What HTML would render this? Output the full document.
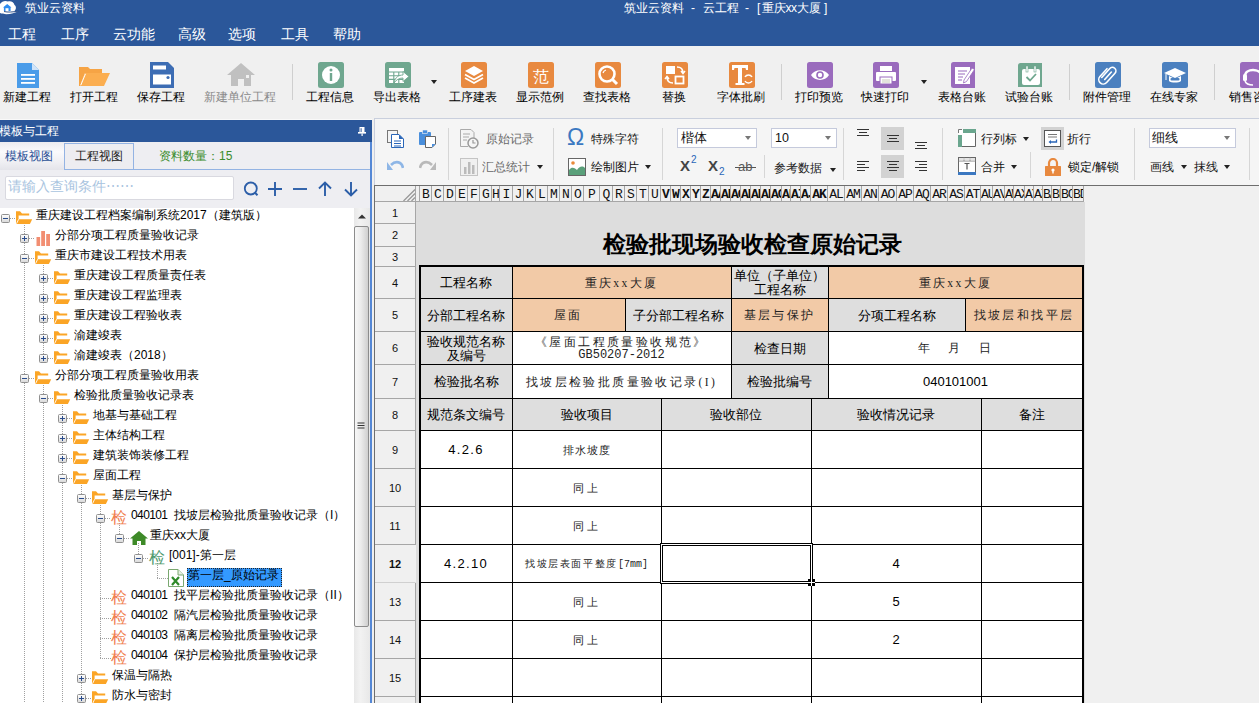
<!DOCTYPE html>
<html><head><meta charset="utf-8"><style>
*{margin:0;padding:0;box-sizing:border-box}
html,body{width:1259px;height:703px;overflow:hidden;background:#f0f0f0;font-family:"Liberation Sans",sans-serif;color:#000;position:relative}
.a{position:absolute}
.menu{position:absolute;top:25px;font-size:14px;line-height:18px;color:#fff}
.tlb{position:absolute;top:89px;width:120px;text-align:center;font-size:12px;line-height:16px;white-space:nowrap;font-weight:500}
.arr{position:absolute;width:0;height:0;border-left:3.5px solid transparent;border-right:3.5px solid transparent;border-top:4px solid #222}
</style></head><body>
<div class="a" style="left:0;top:0;width:1259px;height:46px;background:#2b579a;color:#fff">
  <svg class="a" style="left:0;top:0" width="20" height="16" viewBox="0 0 20 16">
    <path d="M0 4 C2 0.5 6 0.5 8 1.5 C11 0.5 14 2.5 14.5 5 C16.5 6 16.5 10 14 11.2 L18.5 11.2 C14 13.5 6 15.5 0 13 Z" fill="#fff"/>
    <path d="M3 7.5 L7.2 4 L11.5 7.5 L10.6 7.5 L10.6 11 L3.9 11 L3.9 7.5 Z" fill="#2d8cf0"/>
    <rect x="5.5" y="8.2" width="3" height="2.8" fill="#fff"/>
    <path d="M4 11.5 C8 12.5 12 12 18.5 11.2" stroke="#1b3f7e" stroke-width="0.9" fill="none"/>
  </svg>
  <div class="a" style="left:25px;top:0px;font-size:12px;line-height:16px">筑业云资料</div>
  <div class="a" style="left:624px;top:0px;font-size:12px;line-height:16px;white-space:nowrap">筑业云资料</div>
  <div class="a" style="left:691px;top:0px;font-size:12px;line-height:16px">-</div>
  <div class="a" style="left:703px;top:0px;font-size:12px;line-height:16px;white-space:nowrap">云工程</div>
  <div class="a" style="left:745px;top:0px;font-size:12px;line-height:16px">-</div>
  <div class="a" style="left:757px;top:0px;font-size:12px;line-height:16px">[</div>
  <div class="a" style="left:762px;top:0px;font-size:12px;line-height:16px;white-space:nowrap;letter-spacing:-0.3px">重庆xx大厦</div>
  <div class="a" style="left:824px;top:0px;font-size:12px;line-height:16px">]</div>

<div class="menu" style="left:8px">工程</div>
<div class="menu" style="left:61px">工序</div>
<div class="menu" style="left:113px">云功能</div>
<div class="menu" style="left:178px">高级</div>
<div class="menu" style="left:228px">选项</div>
<div class="menu" style="left:281px">工具</div>
<div class="menu" style="left:333px">帮助</div>
</div>
<div class="a" style="left:0;top:46px;width:1259px;height:72px;background:#f0f0f0"></div>
<svg class="a" style="left:16px;top:62px" width="24" height="26" viewBox="0 0 24 26"><path d="M1 1 H16 L23 8 V26 H1 Z" fill="#4a9ce9"/><path d="M16 1 V8 H23 Z" fill="#cfe3f8"/><rect x="5" y="12" width="14" height="1.8" fill="#fff"/><rect x="5" y="16" width="14" height="1.8" fill="#fff"/><rect x="5" y="20" width="14" height="1.8" fill="#fff"/></svg>
<div class="tlb" style="left:-33px;color:#000">新建工程</div>
<svg class="a" style="left:79px;top:64px" width="31" height="23" viewBox="0 0 31 23"><path d="M0 3 H9 L11 5 H23 V9 H6 L1 22 H0 Z" fill="#f6a445"/><path d="M6 9 H31 L25 22 H1 Z" fill="#fbae50"/><path d="M6.5 9.8 L1.8 21.2" stroke="#fff" stroke-width="1"/></svg>
<div class="tlb" style="left:34px;color:#000">打开工程</div>
<svg class="a" style="left:150px;top:62px" width="24" height="26" viewBox="0 0 24 26"><path d="M0 0 H18 L24 6 V26 H0 Z" fill="#3d6db4"/><rect x="3" y="3.5" width="13" height="4" fill="#fff"/><rect x="3" y="12.5" width="18" height="10" fill="#fff"/><circle cx="18" cy="15.5" r="1.6" fill="#3d6db4"/></svg>
<div class="tlb" style="left:101px;color:#000">保存工程</div>
<svg class="a" style="left:227px;top:63px" width="28" height="23" viewBox="0 0 28 23"><path d="M14 0 L28 12 H24 V24 H4 V12 H0 Z" fill="#c0c0c0"/><rect x="11" y="16" width="6" height="8" fill="#f0f0f0"/><rect x="19" y="12" width="3" height="3" fill="#f0f0f0"/></svg>
<div class="tlb" style="left:180px;color:#8a8a8a">新建单位工程</div>
<svg class="a" style="left:318px;top:62px" width="26" height="26" viewBox="0 0 26 26"><rect x="0" y="0" width="26" height="26" rx="2.5" fill="#6fa78f"/><circle cx="13" cy="13" r="9" fill="#fff"/><rect x="11.8" y="11" width="2.4" height="8" fill="#6fa78f"/><circle cx="13" cy="8" r="1.5" fill="#6fa78f"/></svg>
<div class="tlb" style="left:270px;color:#000">工程信息</div>
<svg class="a" style="left:385px;top:62px" width="26" height="26" viewBox="0 0 26 26"><rect x="0" y="0" width="26" height="26" rx="2.5" fill="#6fa78f"/><rect x="4" y="6" width="15" height="15" fill="#fff"/><path d="M4 10 H19 M4 13.7 H19 M4 17.4 H19 M8.8 10 V21 M13.8 10 V21" stroke="#6fa78f" stroke-width="1.1"/><path d="M9 21 C10 15 14 13 18 13 V9.5 L24 14.5 L18 19.5 V16 C14 16 11 18 9 21 Z" fill="#fff" stroke="#6fa78f" stroke-width="0.9"/></svg>
<div class="tlb" style="left:337px;color:#000">导出表格</div>
<svg class="a" style="left:461px;top:62px" width="26" height="26" viewBox="0 0 26 26"><rect x="0" y="0" width="26" height="26" rx="2.5" fill="#e8893f"/><path d="M13 4 L22 9 L13 14 L4 9 Z" fill="#fff"/><path d="M4 12.5 L13 17.5 L22 12.5" fill="none" stroke="#fff" stroke-width="1.8"/><path d="M4 16 L13 21 L22 16" fill="none" stroke="#fff" stroke-width="1.8"/></svg>
<div class="tlb" style="left:413px;color:#000">工序建表</div>
<svg class="a" style="left:528px;top:62px" width="26" height="26" viewBox="0 0 26 26"><rect x="0" y="0" width="26" height="26" rx="2.5" fill="#e8893f"/><text x="13" y="19.5" font-size="16" fill="#fff" text-anchor="middle">范</text></svg>
<div class="tlb" style="left:480px;color:#000">显示范例</div>
<svg class="a" style="left:595px;top:62px" width="26" height="26" viewBox="0 0 26 26"><rect x="0" y="0" width="26" height="26" rx="2.5" fill="#e8893f"/><circle cx="12" cy="12" r="7.5" fill="none" stroke="#fff" stroke-width="2.6"/><path d="M17 17 L22 22" stroke="#fff" stroke-width="3"/><path d="M8 11 A4 4 0 0 1 11 8" stroke="#fff" stroke-width="1.2" fill="none"/></svg>
<div class="tlb" style="left:547px;color:#000">查找表格</div>
<svg class="a" style="left:662px;top:62px" width="26" height="26" viewBox="0 0 26 26"><rect x="0" y="0" width="26" height="26" rx="2.5" fill="#e8893f"/><rect x="4" y="4" width="9" height="8" fill="#fff"/><rect x="13.5" y="14.5" width="8" height="7" fill="none" stroke="#fff" stroke-width="1.8"/><path d="M15 5 C19 5 21 7 21 11 M19 9 L21 11.5 L23 9" fill="none" stroke="#fff" stroke-width="1.5"/><path d="M11 21 C7 21 5 19 5 15 M3 17 L5 14.5 L7 17" fill="none" stroke="#fff" stroke-width="1.5"/></svg>
<div class="tlb" style="left:614px;color:#000">替换</div>
<svg class="a" style="left:729px;top:62px" width="26" height="26" viewBox="0 0 26 26"><rect x="0" y="0" width="26" height="26" rx="2.5" fill="#e8893f"/><path d="M3 3 H19 V8 H17 L16.5 6 H13 V21 H15.5 V23 H6.5 V21 H9 V6 H5.5 L5 8 H3 Z" fill="#fff"/><path d="M16 15 A4 4 0 0 1 23 15 M23 19 A4 4 0 0 1 16 19" fill="none" stroke="#fff" stroke-width="1.5"/></svg>
<div class="tlb" style="left:681px;color:#000">字体批刷</div>
<svg class="a" style="left:807px;top:62px" width="26" height="26" viewBox="0 0 26 26"><rect x="0" y="0" width="26" height="26" rx="2.5" fill="#9a6bbd"/><path d="M4 13 C8 6.5 18 6.5 22 13 C18 19.5 8 19.5 4 13 Z" fill="#fff"/><circle cx="13" cy="13" r="3.8" fill="#9a6bbd"/><circle cx="13" cy="13" r="2.2" fill="#fff"/></svg>
<div class="tlb" style="left:759px;color:#000">打印预览</div>
<svg class="a" style="left:873px;top:62px" width="26" height="26" viewBox="0 0 26 26"><rect x="0" y="0" width="26" height="26" rx="2.5" fill="#9a6bbd"/><rect x="7" y="4" width="12" height="5" fill="#fff"/><rect x="3" y="10" width="20" height="9" rx="1" fill="#fff"/><rect x="7" y="15" width="12" height="7" fill="#fff" stroke="#9a6bbd" stroke-width="1"/><path d="M9 18 H17 M9 20 H17" stroke="#bba" stroke-width="0.8"/></svg>
<div class="tlb" style="left:825px;color:#000">快速打印</div>
<svg class="a" style="left:951px;top:62px" width="24" height="26" viewBox="0 0 24 26"><rect x="0" y="0" width="26" height="26" rx="2.5" fill="#9a6bbd"/><rect x="4" y="5" width="15" height="17" fill="#fff"/><path d="M7 9 H16 M7 12 H14 M7 15 H12 M7 18 H11" stroke="#9a6bbd" stroke-width="1.2"/><path d="M13 18 L21 6 L23.5 7.5 L15.5 19.5 L12.5 21 Z" fill="#fff" stroke="#9a6bbd" stroke-width="0.8"/></svg>
<div class="tlb" style="left:902px;color:#000">表格台账</div>
<svg class="a" style="left:1018px;top:63px" width="24" height="24" viewBox="0 0 24 24"><rect x="0" y="0" width="26" height="26" rx="2.5" fill="#6fa78f"/><rect x="4" y="6" width="18" height="16" rx="2" fill="#fff"/><rect x="8" y="3" width="2" height="6" fill="#fff" stroke="#6fa78f" stroke-width="0.6"/><rect x="16" y="3" width="2" height="6" fill="#fff" stroke="#6fa78f" stroke-width="0.6"/><path d="M8.5 14 L12 17.5 L18 11" fill="none" stroke="#6fa78f" stroke-width="1.8"/></svg>
<div class="tlb" style="left:969px;color:#000">试验台账</div>
<svg class="a" style="left:1095px;top:62px" width="26" height="26" viewBox="0 0 26 26"><rect x="0" y="0" width="26" height="26" rx="2.5" fill="#4b80bf"/><g transform="rotate(42 13 13)"><path d="M10 19 V7 A3.5 3.5 0 0 1 17 7 V19.5 A4.5 4.5 0 0 1 8 19.5 V9 M13.5 8.5 V18.5" fill="none" stroke="#fff" stroke-width="1.6" stroke-linecap="round"/></g></svg>
<div class="tlb" style="left:1047px;color:#000">附件管理</div>
<svg class="a" style="left:1162px;top:62px" width="26" height="26" viewBox="0 0 26 26"><rect x="0" y="0" width="26" height="26" rx="2.5" fill="#4b80bf"/><path d="M2 11 L13 6 L24 11 L13 16 Z" fill="#fff"/><path d="M7 14 V19 C9 21 17 21 19 19 V14 L13 17 Z" fill="#fff"/><rect x="8.5" y="16" width="9" height="2.5" rx="1" fill="#4b80bf"/><path d="M4 12 V18" stroke="#fff" stroke-width="1"/></svg>
<div class="tlb" style="left:1114px;color:#000">在线专家</div>
<svg class="a" style="left:1240px;top:62px" width="26" height="26" viewBox="0 0 26 26"><rect x="0" y="0" width="26" height="26" rx="2.5" fill="#9a6bbd"/><path d="M5 14 C5 6 21 6 21 14" fill="none" stroke="#fff" stroke-width="2.5"/><rect x="3" y="12" width="4" height="7" rx="1.5" fill="#fff"/><path d="M5 19 C6 22 10 23 13 23" fill="none" stroke="#fff" stroke-width="1.5"/></svg>
<div class="tlb" style="left:1193px;color:#000">销售咨询</div>
<div class="a" style="left:292px;top:64px;width:1px;height:36px;background:#cfcfcf"></div>
<div class="a" style="left:781px;top:64px;width:1px;height:36px;background:#cfcfcf"></div>
<div class="a" style="left:1069px;top:64px;width:1px;height:36px;background:#cfcfcf"></div>
<div class="a" style="left:1214px;top:64px;width:1px;height:36px;background:#cfcfcf"></div>
<div class="arr" style="left:431px;top:80px"></div>
<div class="arr" style="left:921px;top:80px"></div>
<div class="a" style="left:0;top:119px;width:372px;height:1px;background:#f9f9f9"></div>
<div class="a" style="left:0;top:120px;width:372px;height:22px;background:#2b579a"></div>
<div class="a" style="left:-1px;top:123px;font-size:12px;line-height:16px;color:#fff">模板与工程</div>
<svg class="a" style="left:358px;top:127px" width="8" height="9" viewBox="0 0 8 9"><rect x="1.5" y="0" width="5" height="5.2" fill="#fff"/><rect x="2.6" y="1.2" width="1" height="4" fill="#2b579a"/><rect x="0" y="5" width="8" height="1.6" fill="#fff"/><rect x="3.5" y="6.5" width="1.2" height="2.5" fill="#fff"/></svg>
<div class="a" style="left:0;top:142px;width:370px;height:66px;background:#eeeef2"></div>
<div class="a" style="left:370px;top:142px;width:2px;height:561px;background:#5588d6"></div>
<div class="a" style="left:0;top:142px;width:64px;height:28px;background:linear-gradient(#ececf0 0%,#fafafc 35%,#eeeef2 75%,#e4e4ea 100%)"></div>
<div class="a" style="left:5px;top:148px;font-size:12px;line-height:16px;color:#2a5096">模板视图</div>
<div class="a" style="left:64px;top:143px;width:70px;height:27px;border:1px solid #93b3e3;background:#ededf1"></div>
<div class="a" style="left:75px;top:148px;font-size:12px;line-height:16px;color:#222">工程视图</div>
<div class="a" style="left:134px;top:169px;width:236px;height:1px;background:#93b3e3"></div>
<div class="a" style="left:159px;top:148px;font-size:12px;line-height:16px;color:#3a8c2c">资料数量：15</div>
<div class="a" style="left:5px;top:176px;width:229px;height:24px;background:#fff;border:1px solid #d9d9e0;border-radius:2px"></div>
<div class="a" style="left:8px;top:177px;font-size:14px;line-height:18px;color:#a9c4e0;white-space:nowrap">请输入查询条件⋯⋯</div>
<svg class="a" style="left:240px;top:179px" width="122" height="20" viewBox="0 0 122 20"><circle cx="10.8" cy="9.5" r="6" fill="none" stroke="#2c5ea8" stroke-width="1.8"/><path d="M14.8 13.5 L17.5 16.2" stroke="#2c5ea8" stroke-width="2"/><path d="M28 10 H42 M35 3 V17" stroke="#2c5ea8" stroke-width="1.9"/><path d="M53 10 H67" stroke="#2c5ea8" stroke-width="1.9"/><path d="M85 3.5 V17 M79 9.5 L85 3.5 L91 9.5" stroke="#2c5ea8" stroke-width="1.9" fill="none"/><path d="M111 3 V16.5 M105 10.5 L111 16.5 L117 10.5" stroke="#2c5ea8" stroke-width="1.9" fill="none"/></svg>
<div class="a" style="left:0;top:208px;width:354px;height:495px;background:#fff;overflow:hidden">
<div class="a" style="left:24px;top:15px;width:1px;height:155px;background:repeating-linear-gradient(to bottom,#a0a0a0 0,#a0a0a0 1px,transparent 1px,transparent 2px)"></div>
<div class="a" style="left:24px;top:175px;width:1px;height:321px;background:repeating-linear-gradient(to bottom,#a0a0a0 0,#a0a0a0 1px,transparent 1px,transparent 2px)"></div>
<div class="a" style="left:43px;top:55px;width:1px;height:95px;background:repeating-linear-gradient(to bottom,#a0a0a0 0,#a0a0a0 1px,transparent 1px,transparent 2px)"></div>
<div class="a" style="left:43px;top:175px;width:1px;height:321px;background:repeating-linear-gradient(to bottom,#a0a0a0 0,#a0a0a0 1px,transparent 1px,transparent 2px)"></div>
<div class="a" style="left:62px;top:195px;width:1px;height:301px;background:repeating-linear-gradient(to bottom,#a0a0a0 0,#a0a0a0 1px,transparent 1px,transparent 2px)"></div>
<div class="a" style="left:81px;top:275px;width:1px;height:221px;background:repeating-linear-gradient(to bottom,#a0a0a0 0,#a0a0a0 1px,transparent 1px,transparent 2px)"></div>
<div class="a" style="left:100px;top:295px;width:1px;height:155px;background:repeating-linear-gradient(to bottom,#a0a0a0 0,#a0a0a0 1px,transparent 1px,transparent 2px)"></div>
<div class="a" style="left:119px;top:315px;width:1px;height:15px;background:repeating-linear-gradient(to bottom,#a0a0a0 0,#a0a0a0 1px,transparent 1px,transparent 2px)"></div>
<div class="a" style="left:138px;top:335px;width:1px;height:15px;background:repeating-linear-gradient(to bottom,#a0a0a0 0,#a0a0a0 1px,transparent 1px,transparent 2px)"></div>
<div class="a" style="left:157px;top:355px;width:1px;height:15px;background:repeating-linear-gradient(to bottom,#a0a0a0 0,#a0a0a0 1px,transparent 1px,transparent 2px)"></div>
<div class="a" style="left:10px;top:10px;width:6px;height:1px;background:repeating-linear-gradient(to right,#a0a0a0 0,#a0a0a0 1px,transparent 1px,transparent 2px)"></div>
<div class="a" style="left:29px;top:30px;width:6px;height:1px;background:repeating-linear-gradient(to right,#a0a0a0 0,#a0a0a0 1px,transparent 1px,transparent 2px)"></div>
<div class="a" style="left:29px;top:50px;width:6px;height:1px;background:repeating-linear-gradient(to right,#a0a0a0 0,#a0a0a0 1px,transparent 1px,transparent 2px)"></div>
<div class="a" style="left:48px;top:70px;width:6px;height:1px;background:repeating-linear-gradient(to right,#a0a0a0 0,#a0a0a0 1px,transparent 1px,transparent 2px)"></div>
<div class="a" style="left:48px;top:90px;width:6px;height:1px;background:repeating-linear-gradient(to right,#a0a0a0 0,#a0a0a0 1px,transparent 1px,transparent 2px)"></div>
<div class="a" style="left:48px;top:110px;width:6px;height:1px;background:repeating-linear-gradient(to right,#a0a0a0 0,#a0a0a0 1px,transparent 1px,transparent 2px)"></div>
<div class="a" style="left:48px;top:130px;width:6px;height:1px;background:repeating-linear-gradient(to right,#a0a0a0 0,#a0a0a0 1px,transparent 1px,transparent 2px)"></div>
<div class="a" style="left:48px;top:150px;width:6px;height:1px;background:repeating-linear-gradient(to right,#a0a0a0 0,#a0a0a0 1px,transparent 1px,transparent 2px)"></div>
<div class="a" style="left:29px;top:170px;width:6px;height:1px;background:repeating-linear-gradient(to right,#a0a0a0 0,#a0a0a0 1px,transparent 1px,transparent 2px)"></div>
<div class="a" style="left:48px;top:190px;width:6px;height:1px;background:repeating-linear-gradient(to right,#a0a0a0 0,#a0a0a0 1px,transparent 1px,transparent 2px)"></div>
<div class="a" style="left:67px;top:210px;width:6px;height:1px;background:repeating-linear-gradient(to right,#a0a0a0 0,#a0a0a0 1px,transparent 1px,transparent 2px)"></div>
<div class="a" style="left:67px;top:230px;width:6px;height:1px;background:repeating-linear-gradient(to right,#a0a0a0 0,#a0a0a0 1px,transparent 1px,transparent 2px)"></div>
<div class="a" style="left:67px;top:250px;width:6px;height:1px;background:repeating-linear-gradient(to right,#a0a0a0 0,#a0a0a0 1px,transparent 1px,transparent 2px)"></div>
<div class="a" style="left:67px;top:270px;width:6px;height:1px;background:repeating-linear-gradient(to right,#a0a0a0 0,#a0a0a0 1px,transparent 1px,transparent 2px)"></div>
<div class="a" style="left:86px;top:290px;width:6px;height:1px;background:repeating-linear-gradient(to right,#a0a0a0 0,#a0a0a0 1px,transparent 1px,transparent 2px)"></div>
<div class="a" style="left:105px;top:310px;width:6px;height:1px;background:repeating-linear-gradient(to right,#a0a0a0 0,#a0a0a0 1px,transparent 1px,transparent 2px)"></div>
<div class="a" style="left:124px;top:330px;width:6px;height:1px;background:repeating-linear-gradient(to right,#a0a0a0 0,#a0a0a0 1px,transparent 1px,transparent 2px)"></div>
<div class="a" style="left:143px;top:350px;width:6px;height:1px;background:repeating-linear-gradient(to right,#a0a0a0 0,#a0a0a0 1px,transparent 1px,transparent 2px)"></div>
<div class="a" style="left:157px;top:370px;width:11px;height:1px;background:repeating-linear-gradient(to right,#a0a0a0 0,#a0a0a0 1px,transparent 1px,transparent 2px)"></div>
<div class="a" style="left:100px;top:390px;width:11px;height:1px;background:repeating-linear-gradient(to right,#a0a0a0 0,#a0a0a0 1px,transparent 1px,transparent 2px)"></div>
<div class="a" style="left:100px;top:410px;width:11px;height:1px;background:repeating-linear-gradient(to right,#a0a0a0 0,#a0a0a0 1px,transparent 1px,transparent 2px)"></div>
<div class="a" style="left:100px;top:430px;width:11px;height:1px;background:repeating-linear-gradient(to right,#a0a0a0 0,#a0a0a0 1px,transparent 1px,transparent 2px)"></div>
<div class="a" style="left:100px;top:450px;width:11px;height:1px;background:repeating-linear-gradient(to right,#a0a0a0 0,#a0a0a0 1px,transparent 1px,transparent 2px)"></div>
<div class="a" style="left:86px;top:470px;width:6px;height:1px;background:repeating-linear-gradient(to right,#a0a0a0 0,#a0a0a0 1px,transparent 1px,transparent 2px)"></div>
<div class="a" style="left:86px;top:490px;width:6px;height:1px;background:repeating-linear-gradient(to right,#a0a0a0 0,#a0a0a0 1px,transparent 1px,transparent 2px)"></div>
<svg class="a" style="left:1px;top:6px" width="9" height="9" viewBox="0 0 9 9"><defs><linearGradient id="eg" x1="0" y1="0" x2="0" y2="1"><stop offset="0" stop-color="#fff"/><stop offset="1" stop-color="#d8d8d8"/></linearGradient></defs><rect x="0.5" y="0.5" width="8" height="8" rx="1" fill="url(#eg)" stroke="#909090"/><rect x="2" y="4" width="5" height="1" fill="#2a4c8c"/></svg>
<div class="a" style="left:16px;top:3px"><svg width="18" height="14" viewBox="0 0 18 14"><path d="M0 0.2 H4 L6 2.6 H13.2 V4.6 H2.6 V12.6 H0 Z" fill="#fba526"/><path d="M2.3 8.3 H16.2 L13.9 12.9 H0.4 Z" fill="#fba526"/><path d="M2.6 8.3 L0.6 12.6" stroke="#fff" stroke-width="0.9"/></svg></div>
<div class="a" style="left:36px;top:-1px;font-size:12px;line-height:16px;color:#000;white-space:nowrap;font-weight:500">重庆建设工程档案编制系统2017（建筑版）</div>
<svg class="a" style="left:20px;top:26px" width="9" height="9" viewBox="0 0 9 9"><defs><linearGradient id="eg" x1="0" y1="0" x2="0" y2="1"><stop offset="0" stop-color="#fff"/><stop offset="1" stop-color="#d8d8d8"/></linearGradient></defs><rect x="0.5" y="0.5" width="8" height="8" rx="1" fill="url(#eg)" stroke="#909090"/><rect x="2" y="4" width="5" height="1" fill="#2a4c8c"/><rect x="4" y="2" width="1" height="5" fill="#2a4c8c"/></svg>
<div class="a" style="left:36px;top:23px"><svg width="16" height="15" viewBox="0 0 16 15"><rect x="0.5" y="6" width="3.6" height="9" fill="#f28e72"/><rect x="5.2" y="0" width="3.8" height="15" fill="#f28e72"/><rect x="10.2" y="3" width="3.8" height="12" fill="#f28e72"/></svg></div>
<div class="a" style="left:55px;top:19px;font-size:12px;line-height:16px;color:#000;white-space:nowrap;font-weight:500">分部分项工程质量验收记录</div>
<svg class="a" style="left:20px;top:46px" width="9" height="9" viewBox="0 0 9 9"><defs><linearGradient id="eg" x1="0" y1="0" x2="0" y2="1"><stop offset="0" stop-color="#fff"/><stop offset="1" stop-color="#d8d8d8"/></linearGradient></defs><rect x="0.5" y="0.5" width="8" height="8" rx="1" fill="url(#eg)" stroke="#909090"/><rect x="2" y="4" width="5" height="1" fill="#2a4c8c"/></svg>
<div class="a" style="left:35px;top:43px"><svg width="18" height="14" viewBox="0 0 18 14"><path d="M0 0.2 H4 L6 2.6 H13.2 V4.6 H2.6 V12.6 H0 Z" fill="#fba526"/><path d="M2.3 8.3 H16.2 L13.9 12.9 H0.4 Z" fill="#fba526"/><path d="M2.6 8.3 L0.6 12.6" stroke="#fff" stroke-width="0.9"/></svg></div>
<div class="a" style="left:55px;top:39px;font-size:12px;line-height:16px;color:#000;white-space:nowrap;font-weight:500">重庆市建设工程技术用表</div>
<svg class="a" style="left:39px;top:66px" width="9" height="9" viewBox="0 0 9 9"><defs><linearGradient id="eg" x1="0" y1="0" x2="0" y2="1"><stop offset="0" stop-color="#fff"/><stop offset="1" stop-color="#d8d8d8"/></linearGradient></defs><rect x="0.5" y="0.5" width="8" height="8" rx="1" fill="url(#eg)" stroke="#909090"/><rect x="2" y="4" width="5" height="1" fill="#2a4c8c"/><rect x="4" y="2" width="1" height="5" fill="#2a4c8c"/></svg>
<div class="a" style="left:54px;top:63px"><svg width="18" height="14" viewBox="0 0 18 14"><path d="M0 0.2 H4 L6 2.6 H13.2 V4.6 H2.6 V12.6 H0 Z" fill="#fba526"/><path d="M2.3 8.3 H16.2 L13.9 12.9 H0.4 Z" fill="#fba526"/><path d="M2.6 8.3 L0.6 12.6" stroke="#fff" stroke-width="0.9"/></svg></div>
<div class="a" style="left:74px;top:59px;font-size:12px;line-height:16px;color:#000;white-space:nowrap;font-weight:500">重庆建设工程质量责任表</div>
<svg class="a" style="left:39px;top:86px" width="9" height="9" viewBox="0 0 9 9"><defs><linearGradient id="eg" x1="0" y1="0" x2="0" y2="1"><stop offset="0" stop-color="#fff"/><stop offset="1" stop-color="#d8d8d8"/></linearGradient></defs><rect x="0.5" y="0.5" width="8" height="8" rx="1" fill="url(#eg)" stroke="#909090"/><rect x="2" y="4" width="5" height="1" fill="#2a4c8c"/><rect x="4" y="2" width="1" height="5" fill="#2a4c8c"/></svg>
<div class="a" style="left:54px;top:83px"><svg width="18" height="14" viewBox="0 0 18 14"><path d="M0 0.2 H4 L6 2.6 H13.2 V4.6 H2.6 V12.6 H0 Z" fill="#fba526"/><path d="M2.3 8.3 H16.2 L13.9 12.9 H0.4 Z" fill="#fba526"/><path d="M2.6 8.3 L0.6 12.6" stroke="#fff" stroke-width="0.9"/></svg></div>
<div class="a" style="left:74px;top:79px;font-size:12px;line-height:16px;color:#000;white-space:nowrap;font-weight:500">重庆建设工程监理表</div>
<svg class="a" style="left:39px;top:106px" width="9" height="9" viewBox="0 0 9 9"><defs><linearGradient id="eg" x1="0" y1="0" x2="0" y2="1"><stop offset="0" stop-color="#fff"/><stop offset="1" stop-color="#d8d8d8"/></linearGradient></defs><rect x="0.5" y="0.5" width="8" height="8" rx="1" fill="url(#eg)" stroke="#909090"/><rect x="2" y="4" width="5" height="1" fill="#2a4c8c"/><rect x="4" y="2" width="1" height="5" fill="#2a4c8c"/></svg>
<div class="a" style="left:54px;top:103px"><svg width="18" height="14" viewBox="0 0 18 14"><path d="M0 0.2 H4 L6 2.6 H13.2 V4.6 H2.6 V12.6 H0 Z" fill="#fba526"/><path d="M2.3 8.3 H16.2 L13.9 12.9 H0.4 Z" fill="#fba526"/><path d="M2.6 8.3 L0.6 12.6" stroke="#fff" stroke-width="0.9"/></svg></div>
<div class="a" style="left:74px;top:99px;font-size:12px;line-height:16px;color:#000;white-space:nowrap;font-weight:500">重庆建设工程验收表</div>
<svg class="a" style="left:39px;top:126px" width="9" height="9" viewBox="0 0 9 9"><defs><linearGradient id="eg" x1="0" y1="0" x2="0" y2="1"><stop offset="0" stop-color="#fff"/><stop offset="1" stop-color="#d8d8d8"/></linearGradient></defs><rect x="0.5" y="0.5" width="8" height="8" rx="1" fill="url(#eg)" stroke="#909090"/><rect x="2" y="4" width="5" height="1" fill="#2a4c8c"/><rect x="4" y="2" width="1" height="5" fill="#2a4c8c"/></svg>
<div class="a" style="left:54px;top:123px"><svg width="18" height="14" viewBox="0 0 18 14"><path d="M0 0.2 H4 L6 2.6 H13.2 V4.6 H2.6 V12.6 H0 Z" fill="#fba526"/><path d="M2.3 8.3 H16.2 L13.9 12.9 H0.4 Z" fill="#fba526"/><path d="M2.6 8.3 L0.6 12.6" stroke="#fff" stroke-width="0.9"/></svg></div>
<div class="a" style="left:74px;top:119px;font-size:12px;line-height:16px;color:#000;white-space:nowrap;font-weight:500">渝建竣表</div>
<svg class="a" style="left:39px;top:146px" width="9" height="9" viewBox="0 0 9 9"><defs><linearGradient id="eg" x1="0" y1="0" x2="0" y2="1"><stop offset="0" stop-color="#fff"/><stop offset="1" stop-color="#d8d8d8"/></linearGradient></defs><rect x="0.5" y="0.5" width="8" height="8" rx="1" fill="url(#eg)" stroke="#909090"/><rect x="2" y="4" width="5" height="1" fill="#2a4c8c"/><rect x="4" y="2" width="1" height="5" fill="#2a4c8c"/></svg>
<div class="a" style="left:54px;top:143px"><svg width="18" height="14" viewBox="0 0 18 14"><path d="M0 0.2 H4 L6 2.6 H13.2 V4.6 H2.6 V12.6 H0 Z" fill="#fba526"/><path d="M2.3 8.3 H16.2 L13.9 12.9 H0.4 Z" fill="#fba526"/><path d="M2.6 8.3 L0.6 12.6" stroke="#fff" stroke-width="0.9"/></svg></div>
<div class="a" style="left:74px;top:139px;font-size:12px;line-height:16px;color:#000;white-space:nowrap;font-weight:500">渝建竣表（2018）</div>
<svg class="a" style="left:20px;top:166px" width="9" height="9" viewBox="0 0 9 9"><defs><linearGradient id="eg" x1="0" y1="0" x2="0" y2="1"><stop offset="0" stop-color="#fff"/><stop offset="1" stop-color="#d8d8d8"/></linearGradient></defs><rect x="0.5" y="0.5" width="8" height="8" rx="1" fill="url(#eg)" stroke="#909090"/><rect x="2" y="4" width="5" height="1" fill="#2a4c8c"/></svg>
<div class="a" style="left:35px;top:163px"><svg width="18" height="14" viewBox="0 0 18 14"><path d="M0 0.2 H4 L6 2.6 H13.2 V4.6 H2.6 V12.6 H0 Z" fill="#fba526"/><path d="M2.3 8.3 H16.2 L13.9 12.9 H0.4 Z" fill="#fba526"/><path d="M2.6 8.3 L0.6 12.6" stroke="#fff" stroke-width="0.9"/></svg></div>
<div class="a" style="left:55px;top:159px;font-size:12px;line-height:16px;color:#000;white-space:nowrap;font-weight:500">分部分项工程质量验收用表</div>
<svg class="a" style="left:39px;top:186px" width="9" height="9" viewBox="0 0 9 9"><defs><linearGradient id="eg" x1="0" y1="0" x2="0" y2="1"><stop offset="0" stop-color="#fff"/><stop offset="1" stop-color="#d8d8d8"/></linearGradient></defs><rect x="0.5" y="0.5" width="8" height="8" rx="1" fill="url(#eg)" stroke="#909090"/><rect x="2" y="4" width="5" height="1" fill="#2a4c8c"/></svg>
<div class="a" style="left:54px;top:183px"><svg width="18" height="14" viewBox="0 0 18 14"><path d="M0 0.2 H4 L6 2.6 H13.2 V4.6 H2.6 V12.6 H0 Z" fill="#fba526"/><path d="M2.3 8.3 H16.2 L13.9 12.9 H0.4 Z" fill="#fba526"/><path d="M2.6 8.3 L0.6 12.6" stroke="#fff" stroke-width="0.9"/></svg></div>
<div class="a" style="left:74px;top:179px;font-size:12px;line-height:16px;color:#000;white-space:nowrap;font-weight:500">检验批质量验收记录表</div>
<svg class="a" style="left:58px;top:206px" width="9" height="9" viewBox="0 0 9 9"><defs><linearGradient id="eg" x1="0" y1="0" x2="0" y2="1"><stop offset="0" stop-color="#fff"/><stop offset="1" stop-color="#d8d8d8"/></linearGradient></defs><rect x="0.5" y="0.5" width="8" height="8" rx="1" fill="url(#eg)" stroke="#909090"/><rect x="2" y="4" width="5" height="1" fill="#2a4c8c"/><rect x="4" y="2" width="1" height="5" fill="#2a4c8c"/></svg>
<div class="a" style="left:73px;top:203px"><svg width="18" height="14" viewBox="0 0 18 14"><path d="M0 0.2 H4 L6 2.6 H13.2 V4.6 H2.6 V12.6 H0 Z" fill="#fba526"/><path d="M2.3 8.3 H16.2 L13.9 12.9 H0.4 Z" fill="#fba526"/><path d="M2.6 8.3 L0.6 12.6" stroke="#fff" stroke-width="0.9"/></svg></div>
<div class="a" style="left:93px;top:199px;font-size:12px;line-height:16px;color:#000;white-space:nowrap;font-weight:500">地基与基础工程</div>
<svg class="a" style="left:58px;top:226px" width="9" height="9" viewBox="0 0 9 9"><defs><linearGradient id="eg" x1="0" y1="0" x2="0" y2="1"><stop offset="0" stop-color="#fff"/><stop offset="1" stop-color="#d8d8d8"/></linearGradient></defs><rect x="0.5" y="0.5" width="8" height="8" rx="1" fill="url(#eg)" stroke="#909090"/><rect x="2" y="4" width="5" height="1" fill="#2a4c8c"/><rect x="4" y="2" width="1" height="5" fill="#2a4c8c"/></svg>
<div class="a" style="left:73px;top:223px"><svg width="18" height="14" viewBox="0 0 18 14"><path d="M0 0.2 H4 L6 2.6 H13.2 V4.6 H2.6 V12.6 H0 Z" fill="#fba526"/><path d="M2.3 8.3 H16.2 L13.9 12.9 H0.4 Z" fill="#fba526"/><path d="M2.6 8.3 L0.6 12.6" stroke="#fff" stroke-width="0.9"/></svg></div>
<div class="a" style="left:93px;top:219px;font-size:12px;line-height:16px;color:#000;white-space:nowrap;font-weight:500">主体结构工程</div>
<svg class="a" style="left:58px;top:246px" width="9" height="9" viewBox="0 0 9 9"><defs><linearGradient id="eg" x1="0" y1="0" x2="0" y2="1"><stop offset="0" stop-color="#fff"/><stop offset="1" stop-color="#d8d8d8"/></linearGradient></defs><rect x="0.5" y="0.5" width="8" height="8" rx="1" fill="url(#eg)" stroke="#909090"/><rect x="2" y="4" width="5" height="1" fill="#2a4c8c"/><rect x="4" y="2" width="1" height="5" fill="#2a4c8c"/></svg>
<div class="a" style="left:73px;top:243px"><svg width="18" height="14" viewBox="0 0 18 14"><path d="M0 0.2 H4 L6 2.6 H13.2 V4.6 H2.6 V12.6 H0 Z" fill="#fba526"/><path d="M2.3 8.3 H16.2 L13.9 12.9 H0.4 Z" fill="#fba526"/><path d="M2.6 8.3 L0.6 12.6" stroke="#fff" stroke-width="0.9"/></svg></div>
<div class="a" style="left:93px;top:239px;font-size:12px;line-height:16px;color:#000;white-space:nowrap;font-weight:500">建筑装饰装修工程</div>
<svg class="a" style="left:58px;top:266px" width="9" height="9" viewBox="0 0 9 9"><defs><linearGradient id="eg" x1="0" y1="0" x2="0" y2="1"><stop offset="0" stop-color="#fff"/><stop offset="1" stop-color="#d8d8d8"/></linearGradient></defs><rect x="0.5" y="0.5" width="8" height="8" rx="1" fill="url(#eg)" stroke="#909090"/><rect x="2" y="4" width="5" height="1" fill="#2a4c8c"/></svg>
<div class="a" style="left:73px;top:263px"><svg width="18" height="14" viewBox="0 0 18 14"><path d="M0 0.2 H4 L6 2.6 H13.2 V4.6 H2.6 V12.6 H0 Z" fill="#fba526"/><path d="M2.3 8.3 H16.2 L13.9 12.9 H0.4 Z" fill="#fba526"/><path d="M2.6 8.3 L0.6 12.6" stroke="#fff" stroke-width="0.9"/></svg></div>
<div class="a" style="left:93px;top:259px;font-size:12px;line-height:16px;color:#000;white-space:nowrap;font-weight:500">屋面工程</div>
<svg class="a" style="left:77px;top:286px" width="9" height="9" viewBox="0 0 9 9"><defs><linearGradient id="eg" x1="0" y1="0" x2="0" y2="1"><stop offset="0" stop-color="#fff"/><stop offset="1" stop-color="#d8d8d8"/></linearGradient></defs><rect x="0.5" y="0.5" width="8" height="8" rx="1" fill="url(#eg)" stroke="#909090"/><rect x="2" y="4" width="5" height="1" fill="#2a4c8c"/></svg>
<div class="a" style="left:92px;top:283px"><svg width="18" height="14" viewBox="0 0 18 14"><path d="M0 0.2 H4 L6 2.6 H13.2 V4.6 H2.6 V12.6 H0 Z" fill="#fba526"/><path d="M2.3 8.3 H16.2 L13.9 12.9 H0.4 Z" fill="#fba526"/><path d="M2.6 8.3 L0.6 12.6" stroke="#fff" stroke-width="0.9"/></svg></div>
<div class="a" style="left:112px;top:279px;font-size:12px;line-height:16px;color:#000;white-space:nowrap;font-weight:500">基层与保护</div>
<svg class="a" style="left:96px;top:306px" width="9" height="9" viewBox="0 0 9 9"><defs><linearGradient id="eg" x1="0" y1="0" x2="0" y2="1"><stop offset="0" stop-color="#fff"/><stop offset="1" stop-color="#d8d8d8"/></linearGradient></defs><rect x="0.5" y="0.5" width="8" height="8" rx="1" fill="url(#eg)" stroke="#909090"/><rect x="2" y="4" width="5" height="1" fill="#2a4c8c"/></svg>
<div class="a" style="left:111px;top:301px"><div style="font-size:16px;line-height:18px;color:#f07f52;font-weight:300">检</div></div>
<div class="a" style="left:131px;top:299px;font-size:12px;line-height:16px;color:#000;white-space:nowrap;font-weight:500"><span style="letter-spacing:-0.6px">040101</span>&nbsp; 找坡层检验批质量验收记录（I）</div>
<svg class="a" style="left:115px;top:326px" width="9" height="9" viewBox="0 0 9 9"><defs><linearGradient id="eg" x1="0" y1="0" x2="0" y2="1"><stop offset="0" stop-color="#fff"/><stop offset="1" stop-color="#d8d8d8"/></linearGradient></defs><rect x="0.5" y="0.5" width="8" height="8" rx="1" fill="url(#eg)" stroke="#909090"/><rect x="2" y="4" width="5" height="1" fill="#2a4c8c"/></svg>
<div class="a" style="left:130px;top:323px"><svg width="18" height="14" viewBox="0 0 18 14"><path d="M9 0 L18 7.5 H15.5 V14 H11 V10 H7 V14 H2.5 V7.5 H0 Z" fill="#3e8a28"/></svg></div>
<div class="a" style="left:150px;top:319px;font-size:12px;line-height:16px;color:#000;white-space:nowrap;font-weight:500">重庆xx大厦</div>
<svg class="a" style="left:134px;top:346px" width="9" height="9" viewBox="0 0 9 9"><defs><linearGradient id="eg" x1="0" y1="0" x2="0" y2="1"><stop offset="0" stop-color="#fff"/><stop offset="1" stop-color="#d8d8d8"/></linearGradient></defs><rect x="0.5" y="0.5" width="8" height="8" rx="1" fill="url(#eg)" stroke="#909090"/><rect x="2" y="4" width="5" height="1" fill="#2a4c8c"/></svg>
<div class="a" style="left:149px;top:341px"><div style="font-size:16px;line-height:18px;color:#4f9a6e;font-weight:300">检</div></div>
<div class="a" style="left:169px;top:339px;font-size:12px;line-height:16px;color:#000;white-space:nowrap;font-weight:500">[001]-第一层</div>
<div class="a" style="left:168px;top:361px"><svg width="16" height="18" viewBox="0 0 16 18"><path d="M0.5 0.5 H10 L15.5 6 V17.5 H0.5 Z" fill="#fff" stroke="#7aa870"/><path d="M10 0.5 V6 H15.5" fill="#e6f0e2" stroke="#7aa870"/><path d="M4 8 L11 16 M11 8 L4 16" stroke="#2f8a2a" stroke-width="2.2"/></svg></div>
<div class="a" style="left:187px;top:360px;width:95px;height:19px;background:#3399ff;border:1px dotted #222"></div>
<div class="a" style="left:188px;top:359px;font-size:12px;line-height:16px;color:#000;white-space:nowrap;font-weight:500">第一层_原始记录</div>
<div class="a" style="left:111px;top:381px"><div style="font-size:16px;line-height:18px;color:#f07f52;font-weight:300">检</div></div>
<div class="a" style="left:131px;top:379px;font-size:12px;line-height:16px;color:#000;white-space:nowrap;font-weight:500"><span style="letter-spacing:-0.6px">040101</span>&nbsp; 找平层检验批质量验收记录（II）</div>
<div class="a" style="left:111px;top:401px"><div style="font-size:16px;line-height:18px;color:#f07f52;font-weight:300">检</div></div>
<div class="a" style="left:131px;top:399px;font-size:12px;line-height:16px;color:#000;white-space:nowrap;font-weight:500"><span style="letter-spacing:-0.6px">040102</span>&nbsp; 隔汽层检验批质量验收记录</div>
<div class="a" style="left:111px;top:421px"><div style="font-size:16px;line-height:18px;color:#f07f52;font-weight:300">检</div></div>
<div class="a" style="left:131px;top:419px;font-size:12px;line-height:16px;color:#000;white-space:nowrap;font-weight:500"><span style="letter-spacing:-0.6px">040103</span>&nbsp; 隔离层检验批质量验收记录</div>
<div class="a" style="left:111px;top:441px"><div style="font-size:16px;line-height:18px;color:#f07f52;font-weight:300">检</div></div>
<div class="a" style="left:131px;top:439px;font-size:12px;line-height:16px;color:#000;white-space:nowrap;font-weight:500"><span style="letter-spacing:-0.6px">040104</span>&nbsp; 保护层检验批质量验收记录</div>
<svg class="a" style="left:77px;top:466px" width="9" height="9" viewBox="0 0 9 9"><defs><linearGradient id="eg" x1="0" y1="0" x2="0" y2="1"><stop offset="0" stop-color="#fff"/><stop offset="1" stop-color="#d8d8d8"/></linearGradient></defs><rect x="0.5" y="0.5" width="8" height="8" rx="1" fill="url(#eg)" stroke="#909090"/><rect x="2" y="4" width="5" height="1" fill="#2a4c8c"/><rect x="4" y="2" width="1" height="5" fill="#2a4c8c"/></svg>
<div class="a" style="left:92px;top:463px"><svg width="18" height="14" viewBox="0 0 18 14"><path d="M0 0.2 H4 L6 2.6 H13.2 V4.6 H2.6 V12.6 H0 Z" fill="#fba526"/><path d="M2.3 8.3 H16.2 L13.9 12.9 H0.4 Z" fill="#fba526"/><path d="M2.6 8.3 L0.6 12.6" stroke="#fff" stroke-width="0.9"/></svg></div>
<div class="a" style="left:112px;top:459px;font-size:12px;line-height:16px;color:#000;white-space:nowrap;font-weight:500">保温与隔热</div>
<svg class="a" style="left:77px;top:486px" width="9" height="9" viewBox="0 0 9 9"><defs><linearGradient id="eg" x1="0" y1="0" x2="0" y2="1"><stop offset="0" stop-color="#fff"/><stop offset="1" stop-color="#d8d8d8"/></linearGradient></defs><rect x="0.5" y="0.5" width="8" height="8" rx="1" fill="url(#eg)" stroke="#909090"/><rect x="2" y="4" width="5" height="1" fill="#2a4c8c"/><rect x="4" y="2" width="1" height="5" fill="#2a4c8c"/></svg>
<div class="a" style="left:92px;top:483px"><svg width="18" height="14" viewBox="0 0 18 14"><path d="M0 0.2 H4 L6 2.6 H13.2 V4.6 H2.6 V12.6 H0 Z" fill="#fba526"/><path d="M2.3 8.3 H16.2 L13.9 12.9 H0.4 Z" fill="#fba526"/><path d="M2.6 8.3 L0.6 12.6" stroke="#fff" stroke-width="0.9"/></svg></div>
<div class="a" style="left:112px;top:479px;font-size:12px;line-height:16px;color:#000;white-space:nowrap;font-weight:500">防水与密封</div>
</div>
<div class="a" style="left:354px;top:208px;width:16px;height:495px;background:linear-gradient(to right,#e8e8e8,#f2f2f2 40%,#e8e8e8)"></div>
<svg class="a" style="left:357px;top:213px" width="10" height="6" viewBox="0 0 10 6"><path d="M1 5.5 L5 1.5 L9 5.5 Z" fill="#333"/></svg>
<div class="a" style="left:354px;top:226px;width:15px;height:401px;border:1px solid #8c8c8c;border-radius:2px;background:linear-gradient(to right,#f7f7f7,#ececec 45%,#cfcfcf)"></div>
<svg class="a" style="left:357px;top:422px" width="8" height="8" viewBox="0 0 8 8"><path d="M0.5 1 H7.5 M0.5 3.5 H7.5 M0.5 6 H7.5" stroke="#333" stroke-width="1.2"/></svg>
<div class="a" style="left:374px;top:118px;width:885px;height:67px;background:#f5f5f5;border-top:1px solid #c9cfdd;border-left:1px solid #c9cfdd"></div>
<svg class="a" style="left:387px;top:130px" width="18" height="18" viewBox="0 0 18 18"><rect x="0.5" y="0.5" width="10" height="12" fill="#f4f4f4" stroke="#777"/><path d="M4.5 4.5 H12 L16.5 9 V17.5 H4.5 Z" fill="#fff" stroke="#2a66b8"/><path d="M12 4.5 V9 H16.5" fill="#2a66b8"/><path d="M7 11 H14 M7 13.5 H14 M7 16 H14" stroke="#2a66b8" stroke-width="1.2"/></svg>
<svg class="a" style="left:419px;top:130px" width="18" height="18" viewBox="0 0 18 18"><rect x="0" y="2" width="12" height="13" rx="1" fill="#4a8fdc"/><rect x="3.5" y="0" width="5" height="3.5" fill="#4a8fdc" stroke="#f5f5f5" stroke-width="0.6"/><path d="M6.5 6.5 H16.5 V14 L13 17.5 H6.5 Z" fill="#fff" stroke="#666"/><path d="M13 17.5 V14 H16.5" fill="#4a8fdc"/></svg>
<svg class="a" style="left:387px;top:159px" width="17" height="14" viewBox="0 0 17 14"><path d="M4 6 C9 1 15 3 16 9" fill="none" stroke="#8eb6e6" stroke-width="2.6"/><path d="M0 3 L6 11 L0 11 Z" fill="#8eb6e6"/></svg>
<svg class="a" style="left:419px;top:159px" width="17" height="14" viewBox="0 0 17 14"><path d="M13 6 C8 1 2 3 1 9" fill="none" stroke="#b9b9b9" stroke-width="2.6"/><path d="M17 3 L11 11 L17 11 Z" fill="#b9b9b9"/></svg>
<div class="a" style="left:448px;top:128px;width:1px;height:52px;background:#d6d6d6"></div>
<svg class="a" style="left:460px;top:129px" width="19" height="20" viewBox="0 0 19 20"><path d="M0.5 0.5 H11 L14 3.5 V11" fill="#f3f3f3" stroke="#aaa"/><path d="M0.5 0.5 V17.5 H8" fill="none" stroke="#aaa"/><path d="M3 5 H10 M3 8 H9 M3 11 H7" stroke="#aaa" stroke-width="1.1"/><circle cx="13" cy="14" r="5" fill="#f5f5f5" stroke="#999" stroke-width="1.5"/><path d="M13 11 V14 H15.5" stroke="#999" stroke-width="1.2" fill="none"/></svg>
<div class="a" style="left:486px;top:131px;font-size:12px;line-height:16px;color:#6a6a6a;white-space:nowrap;font-weight:500">原始记录</div>
<svg class="a" style="left:460px;top:158px" width="18" height="18" viewBox="0 0 18 18"><rect x="0.5" y="0.5" width="17" height="17" fill="#f0f0f0" stroke="#c4c4c4"/><rect x="4" y="9" width="2.5" height="7" fill="#bbb"/><rect x="8" y="4" width="2.5" height="12" fill="#bbb"/><rect x="12" y="7" width="2.5" height="9" fill="#bbb"/></svg>
<div class="a" style="left:482px;top:159px;font-size:12px;line-height:16px;color:#666;white-space:nowrap;font-weight:500">汇总统计</div>
<div class="arr" style="left:537px;top:165px;border-top-color:#222"></div>
<div class="a" style="left:553px;top:128px;width:1px;height:52px;background:#d6d6d6"></div>
<div class="a" style="left:567px;top:124px;font-size:23px;line-height:26px;color:#3b78c1">Ω</div>
<div class="a" style="left:591px;top:131px;font-size:12px;line-height:16px;color:#111;white-space:nowrap;font-weight:500">特殊字符</div>
<svg class="a" style="left:568px;top:158px" width="18" height="18" viewBox="0 0 18 18"><rect x="0.5" y="0.5" width="17" height="17" fill="#fff" stroke="#666"/><path d="M1 17 L1 12 C4 8 7 10 9 12 C11 9 14 7 17 10 V17 Z" fill="#5aa07a"/><circle cx="5" cy="5" r="1.8" fill="#e88a3a"/></svg>
<div class="a" style="left:591px;top:159px;font-size:12px;line-height:16px;color:#111;white-space:nowrap;font-weight:500">绘制图片</div>
<div class="arr" style="left:645px;top:165px;border-top-color:#222"></div>
<div class="a" style="left:662px;top:128px;width:1px;height:52px;background:#d6d6d6"></div>
<div class="a" style="left:677px;top:128px;width:80px;height:20px;background:#fff;border:1px solid #c5cadc"></div>
<div class="a" style="left:681px;top:130px;font-size:12.5px;line-height:16px;color:#111;white-space:nowrap;font-weight:500">楷体</div>
<div class="arr" style="left:745px;top:136px;border-top-color:#777"></div>
<div class="a" style="left:771px;top:128px;width:66px;height:20px;background:#fff;border:1px solid #c5cadc"></div>
<div class="a" style="left:775px;top:130px;font-size:12.5px;line-height:16px;color:#111;white-space:nowrap;font-weight:500">10</div>
<div class="arr" style="left:825px;top:136px;border-top-color:#777"></div>
<div class="a" style="left:680px;top:157px;font-size:15px;line-height:18px;font-weight:bold;color:#444">X</div>
<div class="a" style="left:691px;top:154px;font-size:10px;line-height:12px;color:#2a66b8">2</div>
<div class="a" style="left:708px;top:157px;font-size:15px;line-height:18px;font-weight:bold;color:#444">X</div>
<div class="a" style="left:719px;top:166px;font-size:10px;line-height:12px;color:#2a66b8">2</div>
<div class="a" style="left:738px;top:159px;font-size:13px;line-height:16px;color:#555">ab</div>
<div class="a" style="left:735px;top:167px;width:21px;height:1px;background:#555"></div>
<div class="a" style="left:764px;top:155px;width:1px;height:23px;background:#d6d6d6"></div>
<div class="a" style="left:774px;top:160px;font-size:12px;line-height:16px;color:#222;white-space:nowrap;font-weight:500">参考数据</div>
<div class="arr" style="left:830px;top:168px;border-top-color:#222"></div>
<div class="a" style="left:843px;top:128px;width:1px;height:52px;background:#d6d6d6"></div>
<div class="a" style="left:881px;top:127px;width:23px;height:23px;background:#d2d2d2"></div>
<div class="a" style="left:881px;top:155px;width:23px;height:23px;background:#d2d2d2"></div>
<svg class="a" style="left:857px;top:129px" width="12" height="8" viewBox="0 0 12 8"><rect x="0" y="0" width="12" height="1" fill="#333"/><rect x="2" y="3" width="8" height="1" fill="#333"/><rect x="0" y="6" width="12" height="1" fill="#333"/></svg>
<svg class="a" style="left:887px;top:135px" width="12" height="8" viewBox="0 0 12 8"><rect x="0" y="0" width="12" height="1" fill="#333"/><rect x="2" y="3" width="8" height="1" fill="#333"/><rect x="0" y="6" width="12" height="1" fill="#333"/></svg>
<svg class="a" style="left:915px;top:142px" width="12" height="8" viewBox="0 0 12 8"><rect x="0" y="0" width="12" height="1" fill="#333"/><rect x="2" y="3" width="8" height="1" fill="#333"/><rect x="0" y="6" width="12" height="1" fill="#333"/></svg>
<svg class="a" style="left:857px;top:161px" width="12" height="10" viewBox="0 0 12 10"><rect x="0" y="0" width="12" height="1" fill="#333"/><rect x="0" y="3" width="8" height="1" fill="#333"/><rect x="0" y="6" width="12" height="1" fill="#333"/><rect x="0" y="9" width="8" height="1" fill="#333"/></svg>
<svg class="a" style="left:887px;top:161px" width="12" height="10" viewBox="0 0 12 10"><rect x="0" y="0" width="12" height="1" fill="#333"/><rect x="2" y="3" width="8" height="1" fill="#333"/><rect x="0" y="6" width="12" height="1" fill="#333"/><rect x="2" y="9" width="8" height="1" fill="#333"/></svg>
<svg class="a" style="left:915px;top:161px" width="12" height="10" viewBox="0 0 12 10"><rect x="0" y="0" width="12" height="1" fill="#333"/><rect x="4" y="3" width="8" height="1" fill="#333"/><rect x="0" y="6" width="12" height="1" fill="#333"/><rect x="4" y="9" width="8" height="1" fill="#333"/></svg>
<div class="a" style="left:942px;top:128px;width:1px;height:52px;background:#d6d6d6"></div>
<svg class="a" style="left:958px;top:129px" width="18" height="18" viewBox="0 0 18 18"><rect x="0.5" y="0.5" width="17" height="17" fill="#fff"/><path d="M17.5 4 V17.5 H4" fill="none" stroke="#666"/><path d="M0.5 4 V0.5 H4" fill="none" stroke="#777"/><rect x="5" y="0" width="13" height="4" fill="#6aa68e"/><rect x="0" y="6" width="4" height="12" fill="#6aa68e"/></svg>
<div class="a" style="left:981px;top:131px;font-size:12px;line-height:16px;color:#111;white-space:nowrap;font-weight:500">行列标</div>
<div class="arr" style="left:1023px;top:137px;border-top-color:#222"></div>
<div class="a" style="left:1041px;top:127px;width:23px;height:23px;background:#d2d2d2"></div>
<svg class="a" style="left:1044px;top:130px" width="17" height="17" viewBox="0 0 17 17"><rect x="0.5" y="0.5" width="16" height="16" fill="#fff" stroke="#555"/><path d="M4 4.5 H13 M4 7 H13" stroke="#777"/><path d="M12.5 9.5 V12 H6" stroke="#2a66b8" stroke-width="1.3" fill="none"/><path d="M4.5 12 L7 10 V14 Z" fill="#2a66b8"/></svg>
<div class="a" style="left:1067px;top:131px;font-size:12px;line-height:16px;color:#111;white-space:nowrap;font-weight:500">折行</div>
<svg class="a" style="left:958px;top:157px" width="18" height="18" viewBox="0 0 18 18"><rect x="0.5" y="0.5" width="17" height="17" fill="#fff" stroke="#666"/><path d="M0.5 4 H17.5 M6 0.5 V4 M12 0.5 V4" stroke="#888"/><rect x="1" y="1" width="4.5" height="2.5" fill="#e4e4e4"/><rect x="6.5" y="1" width="5" height="2.5" fill="#e4e4e4"/><rect x="12.5" y="1" width="4.5" height="2.5" fill="#e4e4e4"/><rect x="0" y="15" width="18" height="3" fill="#3b78c1"/><path d="M6.5 6.5 H11.5 M9 6.5 V12.5" stroke="#555" stroke-width="1.2"/></svg>
<div class="a" style="left:981px;top:159px;font-size:12px;line-height:16px;color:#111;white-space:nowrap;font-weight:500">合并</div>
<div class="arr" style="left:1011px;top:165px;border-top-color:#222"></div>
<div class="a" style="left:1030px;top:152px;width:1px;height:26px;background:#d6d6d6"></div>
<svg class="a" style="left:1045px;top:158px" width="16" height="18" viewBox="0 0 16 18"><path d="M4 8 V5 A4 4 0 0 1 12 5 V8" fill="none" stroke="#e8893f" stroke-width="2.2"/><rect x="0" y="8" width="16" height="10" rx="0.5" fill="#e8893f"/><circle cx="8" cy="12" r="1.6" fill="#fff"/><rect x="7.3" y="12" width="1.4" height="3.5" fill="#fff"/></svg>
<div class="a" style="left:1068px;top:159px;font-size:12px;line-height:16px;color:#111;white-space:nowrap;font-weight:500">锁定/解锁</div>
<div class="a" style="left:1134px;top:128px;width:1px;height:52px;background:#d6d6d6"></div>
<div class="a" style="left:1149px;top:128px;width:87px;height:20px;background:#fff;border:1px solid #c5cadc"></div>
<div class="a" style="left:1152px;top:130px;font-size:12.5px;line-height:16px;color:#111;white-space:nowrap;font-weight:500">细线</div>
<div class="arr" style="left:1224px;top:136px;border-top-color:#777"></div>
<div class="a" style="left:1150px;top:159px;font-size:12px;line-height:16px;color:#111;white-space:nowrap;font-weight:500">画线</div>
<div class="arr" style="left:1181px;top:165px;border-top-color:#222"></div>
<div class="a" style="left:1194px;top:159px;font-size:12px;line-height:16px;color:#111;white-space:nowrap;font-weight:500">抹线</div>
<div class="arr" style="left:1224px;top:165px;border-top-color:#222"></div>
<div class="a" style="left:1249px;top:128px;width:1px;height:52px;background:#d6d6d6"></div>
<div class="a" style="left:374px;top:185px;width:885px;height:518px;background:#f0f0f0;border-top:1px solid #6e6e6e;border-left:1px solid #6e6e6e"></div>
<div class="a" style="left:416px;top:202px;width:669px;height:501px;background:#dddddd"></div>
<div class="a" style="left:416px;top:186px;width:4px;height:16px;padding-top:1px;background:#f0f0f0;border-right:1px solid #a6a6a6;border-bottom:1px solid #a6a6a6;overflow:hidden;font-family:'Liberation Mono',monospace;font-size:13px;line-height:16px;text-align:center;letter-spacing:-1px;font-weight:normal;color:#111"></div>
<div class="a" style="left:420px;top:186px;width:12px;height:16px;padding-top:1px;background:#f0f0f0;border-right:1px solid #a6a6a6;border-bottom:1px solid #a6a6a6;overflow:hidden;font-family:'Liberation Mono',monospace;font-size:13px;line-height:16px;text-align:center;letter-spacing:-1px;font-weight:normal;color:#111">B</div>
<div class="a" style="left:432px;top:186px;width:12px;height:16px;padding-top:1px;background:#f0f0f0;border-right:1px solid #a6a6a6;border-bottom:1px solid #a6a6a6;overflow:hidden;font-family:'Liberation Mono',monospace;font-size:13px;line-height:16px;text-align:center;letter-spacing:-1px;font-weight:normal;color:#111">C</div>
<div class="a" style="left:444px;top:186px;width:12px;height:16px;padding-top:1px;background:#f0f0f0;border-right:1px solid #a6a6a6;border-bottom:1px solid #a6a6a6;overflow:hidden;font-family:'Liberation Mono',monospace;font-size:13px;line-height:16px;text-align:center;letter-spacing:-1px;font-weight:normal;color:#111">D</div>
<div class="a" style="left:456px;top:186px;width:12px;height:16px;padding-top:1px;background:#f0f0f0;border-right:1px solid #a6a6a6;border-bottom:1px solid #a6a6a6;overflow:hidden;font-family:'Liberation Mono',monospace;font-size:13px;line-height:16px;text-align:center;letter-spacing:-1px;font-weight:normal;color:#111">E</div>
<div class="a" style="left:468px;top:186px;width:12px;height:16px;padding-top:1px;background:#f0f0f0;border-right:1px solid #a6a6a6;border-bottom:1px solid #a6a6a6;overflow:hidden;font-family:'Liberation Mono',monospace;font-size:13px;line-height:16px;text-align:center;letter-spacing:-1px;font-weight:normal;color:#111">F</div>
<div class="a" style="left:480px;top:186px;width:12px;height:16px;padding-top:1px;background:#f0f0f0;border-right:1px solid #a6a6a6;border-bottom:1px solid #a6a6a6;overflow:hidden;font-family:'Liberation Mono',monospace;font-size:13px;line-height:16px;text-align:center;letter-spacing:-1px;font-weight:normal;color:#111">G</div>
<div class="a" style="left:492px;top:186px;width:8px;height:16px;padding-top:1px;background:#f0f0f0;border-right:1px solid #a6a6a6;border-bottom:1px solid #a6a6a6;overflow:hidden;font-family:'Liberation Mono',monospace;font-size:13px;line-height:16px;text-align:center;letter-spacing:-1px;font-weight:normal;color:#111">H</div>
<div class="a" style="left:500px;top:186px;width:13px;height:16px;padding-top:1px;background:#f0f0f0;border-right:1px solid #a6a6a6;border-bottom:1px solid #a6a6a6;overflow:hidden;font-family:'Liberation Mono',monospace;font-size:13px;line-height:16px;text-align:center;letter-spacing:-1px;font-weight:normal;color:#111">I</div>
<div class="a" style="left:513px;top:186px;width:11px;height:16px;padding-top:1px;background:#f0f0f0;border-right:1px solid #a6a6a6;border-bottom:1px solid #a6a6a6;overflow:hidden;font-family:'Liberation Mono',monospace;font-size:13px;line-height:16px;text-align:center;letter-spacing:-1px;font-weight:normal;color:#111">J</div>
<div class="a" style="left:524px;top:186px;width:12px;height:16px;padding-top:1px;background:#f0f0f0;border-right:1px solid #a6a6a6;border-bottom:1px solid #a6a6a6;overflow:hidden;font-family:'Liberation Mono',monospace;font-size:13px;line-height:16px;text-align:center;letter-spacing:-1px;font-weight:normal;color:#111">K</div>
<div class="a" style="left:536px;top:186px;width:12px;height:16px;padding-top:1px;background:#f0f0f0;border-right:1px solid #a6a6a6;border-bottom:1px solid #a6a6a6;overflow:hidden;font-family:'Liberation Mono',monospace;font-size:13px;line-height:16px;text-align:center;letter-spacing:-1px;font-weight:normal;color:#111">L</div>
<div class="a" style="left:548px;top:186px;width:12px;height:16px;padding-top:1px;background:#f0f0f0;border-right:1px solid #a6a6a6;border-bottom:1px solid #a6a6a6;overflow:hidden;font-family:'Liberation Mono',monospace;font-size:13px;line-height:16px;text-align:center;letter-spacing:-1px;font-weight:normal;color:#111">M</div>
<div class="a" style="left:560px;top:186px;width:12px;height:16px;padding-top:1px;background:#f0f0f0;border-right:1px solid #a6a6a6;border-bottom:1px solid #a6a6a6;overflow:hidden;font-family:'Liberation Mono',monospace;font-size:13px;line-height:16px;text-align:center;letter-spacing:-1px;font-weight:normal;color:#111">N</div>
<div class="a" style="left:572px;top:186px;width:12px;height:16px;padding-top:1px;background:#f0f0f0;border-right:1px solid #a6a6a6;border-bottom:1px solid #a6a6a6;overflow:hidden;font-family:'Liberation Mono',monospace;font-size:13px;line-height:16px;text-align:center;letter-spacing:-1px;font-weight:normal;color:#111">O</div>
<div class="a" style="left:584px;top:186px;width:16px;height:16px;padding-top:1px;background:#f0f0f0;border-right:1px solid #a6a6a6;border-bottom:1px solid #a6a6a6;overflow:hidden;font-family:'Liberation Mono',monospace;font-size:13px;line-height:16px;text-align:center;letter-spacing:-1px;font-weight:normal;color:#111">P</div>
<div class="a" style="left:600px;top:186px;width:13px;height:16px;padding-top:1px;background:#f0f0f0;border-right:1px solid #a6a6a6;border-bottom:1px solid #a6a6a6;overflow:hidden;font-family:'Liberation Mono',monospace;font-size:13px;line-height:16px;text-align:center;letter-spacing:-1px;font-weight:normal;color:#111">Q</div>
<div class="a" style="left:613px;top:186px;width:12px;height:16px;padding-top:1px;background:#f0f0f0;border-right:1px solid #a6a6a6;border-bottom:1px solid #a6a6a6;overflow:hidden;font-family:'Liberation Mono',monospace;font-size:13px;line-height:16px;text-align:center;letter-spacing:-1px;font-weight:normal;color:#111">R</div>
<div class="a" style="left:625px;top:186px;width:12px;height:16px;padding-top:1px;background:#f0f0f0;border-right:1px solid #a6a6a6;border-bottom:1px solid #a6a6a6;overflow:hidden;font-family:'Liberation Mono',monospace;font-size:13px;line-height:16px;text-align:center;letter-spacing:-1px;font-weight:normal;color:#111">S</div>
<div class="a" style="left:637px;top:186px;width:12px;height:16px;padding-top:1px;background:#f0f0f0;border-right:1px solid #a6a6a6;border-bottom:1px solid #a6a6a6;overflow:hidden;font-family:'Liberation Mono',monospace;font-size:13px;line-height:16px;text-align:center;letter-spacing:-1px;font-weight:normal;color:#111">T</div>
<div class="a" style="left:649px;top:186px;width:12px;height:16px;padding-top:1px;background:#f0f0f0;border-right:1px solid #a6a6a6;border-bottom:1px solid #a6a6a6;overflow:hidden;font-family:'Liberation Mono',monospace;font-size:13px;line-height:16px;text-align:center;letter-spacing:-1px;font-weight:normal;color:#111">U</div>
<div class="a" style="left:661px;top:186px;width:10px;height:16px;padding-top:1px;background:#f0f0f0;border-right:1px solid #a6a6a6;border-bottom:1px solid #a6a6a6;overflow:hidden;font-family:'Liberation Mono',monospace;font-size:13px;line-height:16px;text-align:center;letter-spacing:-1px;font-weight:bold;color:#111">V</div>
<div class="a" style="left:671px;top:186px;width:10px;height:16px;padding-top:1px;background:#f0f0f0;border-right:1px solid #a6a6a6;border-bottom:1px solid #a6a6a6;overflow:hidden;font-family:'Liberation Mono',monospace;font-size:13px;line-height:16px;text-align:center;letter-spacing:-1px;font-weight:bold;color:#111">W</div>
<div class="a" style="left:681px;top:186px;width:10px;height:16px;padding-top:1px;background:#f0f0f0;border-right:1px solid #a6a6a6;border-bottom:1px solid #a6a6a6;overflow:hidden;font-family:'Liberation Mono',monospace;font-size:13px;line-height:16px;text-align:center;letter-spacing:-1px;font-weight:bold;color:#111">X</div>
<div class="a" style="left:691px;top:186px;width:10px;height:16px;padding-top:1px;background:#f0f0f0;border-right:1px solid #a6a6a6;border-bottom:1px solid #a6a6a6;overflow:hidden;font-family:'Liberation Mono',monospace;font-size:13px;line-height:16px;text-align:center;letter-spacing:-1px;font-weight:bold;color:#111">Y</div>
<div class="a" style="left:701px;top:186px;width:10px;height:16px;padding-top:1px;background:#f0f0f0;border-right:1px solid #a6a6a6;border-bottom:1px solid #a6a6a6;overflow:hidden;font-family:'Liberation Mono',monospace;font-size:13px;line-height:16px;text-align:center;letter-spacing:-1px;font-weight:bold;color:#111">Z</div>
<div class="a" style="left:711px;top:186px;width:10px;height:16px;padding-top:1px;background:#f0f0f0;border-right:1px solid #a6a6a6;border-bottom:1px solid #a6a6a6;overflow:hidden;font-family:'Liberation Mono',monospace;font-size:13px;line-height:16px;text-align:center;letter-spacing:-1px;font-weight:bold;color:#111">AA</div>
<div class="a" style="left:721px;top:186px;width:10px;height:16px;padding-top:1px;background:#f0f0f0;border-right:1px solid #a6a6a6;border-bottom:1px solid #a6a6a6;overflow:hidden;font-family:'Liberation Mono',monospace;font-size:13px;line-height:16px;text-align:center;letter-spacing:-1px;font-weight:bold;color:#111">AB</div>
<div class="a" style="left:731px;top:186px;width:10px;height:16px;padding-top:1px;background:#f0f0f0;border-right:1px solid #a6a6a6;border-bottom:1px solid #a6a6a6;overflow:hidden;font-family:'Liberation Mono',monospace;font-size:13px;line-height:16px;text-align:center;letter-spacing:-1px;font-weight:bold;color:#111">AC</div>
<div class="a" style="left:741px;top:186px;width:10px;height:16px;padding-top:1px;background:#f0f0f0;border-right:1px solid #a6a6a6;border-bottom:1px solid #a6a6a6;overflow:hidden;font-family:'Liberation Mono',monospace;font-size:13px;line-height:16px;text-align:center;letter-spacing:-1px;font-weight:bold;color:#111">AD</div>
<div class="a" style="left:751px;top:186px;width:10px;height:16px;padding-top:1px;background:#f0f0f0;border-right:1px solid #a6a6a6;border-bottom:1px solid #a6a6a6;overflow:hidden;font-family:'Liberation Mono',monospace;font-size:13px;line-height:16px;text-align:center;letter-spacing:-1px;font-weight:bold;color:#111">AE</div>
<div class="a" style="left:761px;top:186px;width:10px;height:16px;padding-top:1px;background:#f0f0f0;border-right:1px solid #a6a6a6;border-bottom:1px solid #a6a6a6;overflow:hidden;font-family:'Liberation Mono',monospace;font-size:13px;line-height:16px;text-align:center;letter-spacing:-1px;font-weight:bold;color:#111">AF</div>
<div class="a" style="left:771px;top:186px;width:11px;height:16px;padding-top:1px;background:#f0f0f0;border-right:1px solid #a6a6a6;border-bottom:1px solid #a6a6a6;overflow:hidden;font-family:'Liberation Mono',monospace;font-size:13px;line-height:16px;text-align:center;letter-spacing:-1px;font-weight:bold;color:#111">AG</div>
<div class="a" style="left:782px;top:186px;width:9px;height:16px;padding-top:1px;background:#f0f0f0;border-right:1px solid #a6a6a6;border-bottom:1px solid #a6a6a6;overflow:hidden;font-family:'Liberation Mono',monospace;font-size:13px;line-height:16px;text-align:center;letter-spacing:-1px;font-weight:bold;color:#111">AH</div>
<div class="a" style="left:791px;top:186px;width:10px;height:16px;padding-top:1px;background:#f0f0f0;border-right:1px solid #a6a6a6;border-bottom:1px solid #a6a6a6;overflow:hidden;font-family:'Liberation Mono',monospace;font-size:13px;line-height:16px;text-align:center;letter-spacing:-1px;font-weight:bold;color:#111">AI</div>
<div class="a" style="left:801px;top:186px;width:10px;height:16px;padding-top:1px;background:#f0f0f0;border-right:1px solid #a6a6a6;border-bottom:1px solid #a6a6a6;overflow:hidden;font-family:'Liberation Mono',monospace;font-size:13px;line-height:16px;text-align:center;letter-spacing:-1px;font-weight:bold;color:#111">AJ</div>
<div class="a" style="left:811px;top:186px;width:17px;height:16px;padding-top:1px;background:#f0f0f0;border-right:1px solid #a6a6a6;border-bottom:1px solid #a6a6a6;overflow:hidden;font-family:'Liberation Mono',monospace;font-size:13px;line-height:16px;text-align:center;letter-spacing:-1px;font-weight:bold;color:#111">AK</div>
<div class="a" style="left:828px;top:186px;width:17px;height:16px;padding-top:1px;background:#f0f0f0;border-right:1px solid #a6a6a6;border-bottom:1px solid #a6a6a6;overflow:hidden;font-family:'Liberation Mono',monospace;font-size:13px;line-height:16px;text-align:center;letter-spacing:-1px;font-weight:normal;color:#111">AL</div>
<div class="a" style="left:845px;top:186px;width:17px;height:16px;padding-top:1px;background:#f0f0f0;border-right:1px solid #a6a6a6;border-bottom:1px solid #a6a6a6;overflow:hidden;font-family:'Liberation Mono',monospace;font-size:13px;line-height:16px;text-align:center;letter-spacing:-1px;font-weight:normal;color:#111">AM</div>
<div class="a" style="left:862px;top:186px;width:17px;height:16px;padding-top:1px;background:#f0f0f0;border-right:1px solid #a6a6a6;border-bottom:1px solid #a6a6a6;overflow:hidden;font-family:'Liberation Mono',monospace;font-size:13px;line-height:16px;text-align:center;letter-spacing:-1px;font-weight:normal;color:#111">AN</div>
<div class="a" style="left:879px;top:186px;width:18px;height:16px;padding-top:1px;background:#f0f0f0;border-right:1px solid #a6a6a6;border-bottom:1px solid #a6a6a6;overflow:hidden;font-family:'Liberation Mono',monospace;font-size:13px;line-height:16px;text-align:center;letter-spacing:-1px;font-weight:normal;color:#111">AO</div>
<div class="a" style="left:897px;top:186px;width:17px;height:16px;padding-top:1px;background:#f0f0f0;border-right:1px solid #a6a6a6;border-bottom:1px solid #a6a6a6;overflow:hidden;font-family:'Liberation Mono',monospace;font-size:13px;line-height:16px;text-align:center;letter-spacing:-1px;font-weight:normal;color:#111">AP</div>
<div class="a" style="left:914px;top:186px;width:17px;height:16px;padding-top:1px;background:#f0f0f0;border-right:1px solid #a6a6a6;border-bottom:1px solid #a6a6a6;overflow:hidden;font-family:'Liberation Mono',monospace;font-size:13px;line-height:16px;text-align:center;letter-spacing:-1px;font-weight:normal;color:#111">AQ</div>
<div class="a" style="left:931px;top:186px;width:17px;height:16px;padding-top:1px;background:#f0f0f0;border-right:1px solid #a6a6a6;border-bottom:1px solid #a6a6a6;overflow:hidden;font-family:'Liberation Mono',monospace;font-size:13px;line-height:16px;text-align:center;letter-spacing:-1px;font-weight:normal;color:#111">AR</div>
<div class="a" style="left:948px;top:186px;width:17px;height:16px;padding-top:1px;background:#f0f0f0;border-right:1px solid #a6a6a6;border-bottom:1px solid #a6a6a6;overflow:hidden;font-family:'Liberation Mono',monospace;font-size:13px;line-height:16px;text-align:center;letter-spacing:-1px;font-weight:normal;color:#111">AS</div>
<div class="a" style="left:965px;top:186px;width:16px;height:16px;padding-top:1px;background:#f0f0f0;border-right:1px solid #a6a6a6;border-bottom:1px solid #a6a6a6;overflow:hidden;font-family:'Liberation Mono',monospace;font-size:13px;line-height:16px;text-align:center;letter-spacing:-1px;font-weight:normal;color:#111">AT</div>
<div class="a" style="left:981px;top:186px;width:12px;height:16px;padding-top:1px;background:#f0f0f0;border-right:1px solid #a6a6a6;border-bottom:1px solid #a6a6a6;overflow:hidden;font-family:'Liberation Mono',monospace;font-size:13px;line-height:16px;text-align:center;letter-spacing:-1px;font-weight:normal;color:#111">AU</div>
<div class="a" style="left:993px;top:186px;width:12px;height:16px;padding-top:1px;background:#f0f0f0;border-right:1px solid #a6a6a6;border-bottom:1px solid #a6a6a6;overflow:hidden;font-family:'Liberation Mono',monospace;font-size:13px;line-height:16px;text-align:center;letter-spacing:-1px;font-weight:normal;color:#111">AV</div>
<div class="a" style="left:1005px;top:186px;width:9px;height:16px;padding-top:1px;background:#f0f0f0;border-right:1px solid #a6a6a6;border-bottom:1px solid #a6a6a6;overflow:hidden;font-family:'Liberation Mono',monospace;font-size:13px;line-height:16px;text-align:center;letter-spacing:-1px;font-weight:normal;color:#111">AW</div>
<div class="a" style="left:1014px;top:186px;width:11px;height:16px;padding-top:1px;background:#f0f0f0;border-right:1px solid #a6a6a6;border-bottom:1px solid #a6a6a6;overflow:hidden;font-family:'Liberation Mono',monospace;font-size:13px;line-height:16px;text-align:center;letter-spacing:-1px;font-weight:normal;color:#111">AX</div>
<div class="a" style="left:1025px;top:186px;width:9px;height:16px;padding-top:1px;background:#f0f0f0;border-right:1px solid #a6a6a6;border-bottom:1px solid #a6a6a6;overflow:hidden;font-family:'Liberation Mono',monospace;font-size:13px;line-height:16px;text-align:center;letter-spacing:-1px;font-weight:normal;color:#111">AY</div>
<div class="a" style="left:1034px;top:186px;width:9px;height:16px;padding-top:1px;background:#f0f0f0;border-right:1px solid #a6a6a6;border-bottom:1px solid #a6a6a6;overflow:hidden;font-family:'Liberation Mono',monospace;font-size:13px;line-height:16px;text-align:center;letter-spacing:-1px;font-weight:normal;color:#111">AZ</div>
<div class="a" style="left:1043px;top:186px;width:9px;height:16px;padding-top:1px;background:#f0f0f0;border-right:1px solid #a6a6a6;border-bottom:1px solid #a6a6a6;overflow:hidden;font-family:'Liberation Mono',monospace;font-size:13px;line-height:16px;text-align:center;letter-spacing:-1px;font-weight:normal;color:#111">BA</div>
<div class="a" style="left:1052px;top:186px;width:9px;height:16px;padding-top:1px;background:#f0f0f0;border-right:1px solid #a6a6a6;border-bottom:1px solid #a6a6a6;overflow:hidden;font-family:'Liberation Mono',monospace;font-size:13px;line-height:16px;text-align:center;letter-spacing:-1px;font-weight:normal;color:#111">BB</div>
<div class="a" style="left:1061px;top:186px;width:12px;height:16px;padding-top:1px;background:#f0f0f0;border-right:1px solid #a6a6a6;border-bottom:1px solid #a6a6a6;overflow:hidden;font-family:'Liberation Mono',monospace;font-size:13px;line-height:16px;text-align:center;letter-spacing:-1px;font-weight:normal;color:#111">BC</div>
<div class="a" style="left:1073px;top:186px;width:11px;height:16px;padding-top:1px;background:#f0f0f0;border-right:1px solid #a6a6a6;border-bottom:1px solid #a6a6a6;overflow:hidden;font-family:'Liberation Mono',monospace;font-size:13px;line-height:16px;text-align:center;letter-spacing:-1px;font-weight:normal;color:#111">BD</div>
<div class="a" style="left:375px;top:186px;width:41px;height:16px;background:#f0f0f0;border-right:1px solid #a6a6a6;border-bottom:1px solid #a6a6a6"></div>
<svg class="a" style="left:403px;top:189px" width="12" height="12" viewBox="0 0 12 12"><path d="M0.5 12 L12 0.5 M4.5 12 L12 4.5 M8.5 12 L12 8.5" stroke="#999" stroke-width="1.3"/></svg>
<div class="a" style="left:375px;top:202px;width:41px;height:22px;background:#f0f0f0;border-right:1px solid #a6a6a6;border-bottom:1px solid #a6a6a6;display:flex;align-items:center;justify-content:center;font-family:'Liberation Sans',sans-serif;font-size:11px;font-weight:normal;color:#111">1</div>
<div class="a" style="left:375px;top:224px;width:41px;height:23px;background:#f0f0f0;border-right:1px solid #a6a6a6;border-bottom:1px solid #a6a6a6;display:flex;align-items:center;justify-content:center;font-family:'Liberation Sans',sans-serif;font-size:11px;font-weight:normal;color:#111">2</div>
<div class="a" style="left:375px;top:247px;width:41px;height:20px;background:#f0f0f0;border-right:1px solid #a6a6a6;border-bottom:1px solid #a6a6a6;display:flex;align-items:center;justify-content:center;font-family:'Liberation Sans',sans-serif;font-size:11px;font-weight:normal;color:#111">3</div>
<div class="a" style="left:375px;top:267px;width:41px;height:32px;background:#f0f0f0;border-right:1px solid #a6a6a6;border-bottom:1px solid #a6a6a6;display:flex;align-items:center;justify-content:center;font-family:'Liberation Sans',sans-serif;font-size:11px;font-weight:normal;color:#111">4</div>
<div class="a" style="left:375px;top:299px;width:41px;height:33px;background:#f0f0f0;border-right:1px solid #a6a6a6;border-bottom:1px solid #a6a6a6;display:flex;align-items:center;justify-content:center;font-family:'Liberation Sans',sans-serif;font-size:11px;font-weight:normal;color:#111">5</div>
<div class="a" style="left:375px;top:332px;width:41px;height:33px;background:#f0f0f0;border-right:1px solid #a6a6a6;border-bottom:1px solid #a6a6a6;display:flex;align-items:center;justify-content:center;font-family:'Liberation Sans',sans-serif;font-size:11px;font-weight:normal;color:#111">6</div>
<div class="a" style="left:375px;top:365px;width:41px;height:34px;background:#f0f0f0;border-right:1px solid #a6a6a6;border-bottom:1px solid #a6a6a6;display:flex;align-items:center;justify-content:center;font-family:'Liberation Sans',sans-serif;font-size:11px;font-weight:normal;color:#111">7</div>
<div class="a" style="left:375px;top:399px;width:41px;height:32px;background:#f0f0f0;border-right:1px solid #a6a6a6;border-bottom:1px solid #a6a6a6;display:flex;align-items:center;justify-content:center;font-family:'Liberation Sans',sans-serif;font-size:11px;font-weight:normal;color:#111">8</div>
<div class="a" style="left:375px;top:431px;width:41px;height:38px;background:#f0f0f0;border-right:1px solid #a6a6a6;border-bottom:1px solid #a6a6a6;display:flex;align-items:center;justify-content:center;font-family:'Liberation Sans',sans-serif;font-size:11px;font-weight:normal;color:#111">9</div>
<div class="a" style="left:375px;top:469px;width:41px;height:38px;background:#f0f0f0;border-right:1px solid #a6a6a6;border-bottom:1px solid #a6a6a6;display:flex;align-items:center;justify-content:center;font-family:'Liberation Sans',sans-serif;font-size:11px;font-weight:normal;color:#111">10</div>
<div class="a" style="left:375px;top:507px;width:41px;height:38px;background:#f0f0f0;border-right:1px solid #a6a6a6;border-bottom:1px solid #a6a6a6;display:flex;align-items:center;justify-content:center;font-family:'Liberation Sans',sans-serif;font-size:11px;font-weight:normal;color:#111">11</div>
<div class="a" style="left:375px;top:545px;width:41px;height:38px;background:#f0f0f0;border-right:1px solid #f0f0f0;border-bottom:1px solid #d0d0d0;display:flex;align-items:center;justify-content:center;font-family:'Liberation Sans',sans-serif;font-size:11px;font-weight:bold;color:#111">12</div>
<div class="a" style="left:375px;top:583px;width:41px;height:38px;background:#f0f0f0;border-right:1px solid #a6a6a6;border-bottom:1px solid #a6a6a6;display:flex;align-items:center;justify-content:center;font-family:'Liberation Sans',sans-serif;font-size:11px;font-weight:normal;color:#111">13</div>
<div class="a" style="left:375px;top:621px;width:41px;height:38px;background:#f0f0f0;border-right:1px solid #a6a6a6;border-bottom:1px solid #a6a6a6;display:flex;align-items:center;justify-content:center;font-family:'Liberation Sans',sans-serif;font-size:11px;font-weight:normal;color:#111">14</div>
<div class="a" style="left:375px;top:659px;width:41px;height:38px;background:#f0f0f0;border-right:1px solid #a6a6a6;border-bottom:1px solid #a6a6a6;display:flex;align-items:center;justify-content:center;font-family:'Liberation Sans',sans-serif;font-size:11px;font-weight:normal;color:#111">15</div>
<div class="a" style="left:375px;top:697px;width:41px;height:38px;background:#f0f0f0;border-right:1px solid #a6a6a6;border-bottom:1px solid #a6a6a6;display:flex;align-items:center;justify-content:center;font-family:'Liberation Sans',sans-serif;font-size:11px;font-weight:normal;color:#111">16</div>
<div class="a" style="left:420px;top:232px;width:664px;height:26px;text-align:center;font-size:23px;line-height:26px;font-weight:bold;color:#000;font-family:'Liberation Serif',serif">检验批现场验收检查原始记录</div>
<div class="a" style="left:420px;top:266px;width:664px;height:437px;background:#fff"></div>
<div class="a" style="left:420px;top:266px;width:92px;height:32px;background:#dedede;display:flex;align-items:center;justify-content:center;text-align:center;padding-top:2px;font-size:13px;line-height:14px;color:#000;"><div>工程名称</div></div>
<div class="a" style="left:512px;top:266px;width:219px;height:32px;background:#f2caa7;display:flex;align-items:center;justify-content:center;text-align:center;padding-top:2px;font-size:11.5px;line-height:12.5px;color:#000;font-family:'Liberation Serif',serif;letter-spacing:2.4px;color:#222;"><div>重庆xx大厦</div></div>
<div class="a" style="left:731px;top:266px;width:97px;height:32px;background:#dedede;display:flex;align-items:center;justify-content:center;text-align:center;padding-top:2px;font-size:13px;line-height:14px;color:#000;"><div>单位（子单位）<br>工程名称</div></div>
<div class="a" style="left:828px;top:266px;width:255px;height:32px;background:#f2caa7;display:flex;align-items:center;justify-content:center;text-align:center;padding-top:2px;font-size:11.5px;line-height:12.5px;color:#000;font-family:'Liberation Serif',serif;letter-spacing:2.4px;color:#222;"><div>重庆xx大厦</div></div>
<div class="a" style="left:420px;top:298px;width:92px;height:33px;background:#dedede;display:flex;align-items:center;justify-content:center;text-align:center;padding-top:2px;font-size:13px;line-height:14px;color:#000;"><div>分部工程名称</div></div>
<div class="a" style="left:512px;top:298px;width:113px;height:33px;background:#f2caa7;display:flex;align-items:center;justify-content:center;text-align:center;padding-top:2px;font-size:11.5px;line-height:12.5px;color:#000;font-family:'Liberation Serif',serif;letter-spacing:2.4px;color:#222;"><div>屋面</div></div>
<div class="a" style="left:625px;top:298px;width:106px;height:33px;background:#dedede;display:flex;align-items:center;justify-content:center;text-align:center;padding-top:2px;font-size:13px;line-height:14px;color:#000;"><div>子分部工程名称</div></div>
<div class="a" style="left:731px;top:298px;width:97px;height:33px;background:#f2caa7;display:flex;align-items:center;justify-content:center;text-align:center;padding-top:2px;font-size:11.5px;line-height:12.5px;color:#000;font-family:'Liberation Serif',serif;letter-spacing:2.4px;color:#222;"><div>基层与保护</div></div>
<div class="a" style="left:828px;top:298px;width:137px;height:33px;background:#dedede;display:flex;align-items:center;justify-content:center;text-align:center;padding-top:2px;font-size:13px;line-height:14px;color:#000;"><div>分项工程名称</div></div>
<div class="a" style="left:965px;top:298px;width:118px;height:33px;background:#f2caa7;display:flex;align-items:center;justify-content:center;text-align:center;padding-top:2px;font-size:11.5px;line-height:12.5px;color:#000;font-family:'Liberation Serif',serif;letter-spacing:2.4px;color:#222;"><div>找坡层和找平层</div></div>
<div class="a" style="left:420px;top:331px;width:92px;height:33px;background:#dedede;display:flex;align-items:center;justify-content:center;text-align:center;padding-top:2px;font-size:13px;line-height:14px;color:#000;"><div>验收规范名称<br>及编号</div></div>
<div class="a" style="left:512px;top:331px;width:219px;height:33px;background:#fff;display:flex;align-items:center;justify-content:center;text-align:center;padding-top:2px;font-size:11.5px;line-height:12.5px;color:#000;font-family:'Liberation Serif',serif;letter-spacing:2.4px;color:#222;"><div>《屋面工程质量验收规范》<br><span style="letter-spacing:0;font-family:'Liberation Mono',monospace;font-size:12px">GB50207-2012</span></div></div>
<div class="a" style="left:731px;top:331px;width:97px;height:33px;background:#dedede;display:flex;align-items:center;justify-content:center;text-align:center;padding-top:2px;font-size:13px;line-height:14px;color:#000;"><div>检查日期</div></div>
<div class="a" style="left:828px;top:331px;width:255px;height:33px;background:#fff;display:flex;align-items:center;justify-content:center;text-align:center;padding-top:2px;font-size:11.5px;line-height:12.5px;color:#000;font-family:'Liberation Serif',serif;letter-spacing:2.4px;color:#222;"><div>年 &nbsp; 月 &nbsp; 日</div></div>
<div class="a" style="left:420px;top:364px;width:92px;height:34px;background:#dedede;display:flex;align-items:center;justify-content:center;text-align:center;padding-top:2px;font-size:13px;line-height:14px;color:#000;"><div>检验批名称</div></div>
<div class="a" style="left:512px;top:364px;width:219px;height:34px;background:#fff;display:flex;align-items:center;justify-content:center;text-align:center;padding-top:2px;font-size:11.5px;line-height:12.5px;color:#000;font-family:'Liberation Serif',serif;letter-spacing:2.4px;color:#222;"><div>找坡层检验批质量验收记录(I)</div></div>
<div class="a" style="left:731px;top:364px;width:97px;height:34px;background:#dedede;display:flex;align-items:center;justify-content:center;text-align:center;padding-top:2px;font-size:13px;line-height:14px;color:#000;"><div>检验批编号</div></div>
<div class="a" style="left:828px;top:364px;width:255px;height:34px;background:#fff;display:flex;align-items:center;justify-content:center;text-align:center;padding-top:2px;font-size:13px;line-height:14px;color:#000;"><div>040101001</div></div>
<div class="a" style="left:420px;top:398px;width:92px;height:32px;background:#dedede;display:flex;align-items:center;justify-content:center;text-align:center;padding-top:2px;font-size:13px;line-height:14px;color:#000;"><div>规范条文编号</div></div>
<div class="a" style="left:512px;top:398px;width:149px;height:32px;background:#dedede;display:flex;align-items:center;justify-content:center;text-align:center;padding-top:2px;font-size:13px;line-height:14px;color:#000;"><div>验收项目</div></div>
<div class="a" style="left:661px;top:398px;width:150px;height:32px;background:#dedede;display:flex;align-items:center;justify-content:center;text-align:center;padding-top:2px;font-size:13px;line-height:14px;color:#000;"><div>验收部位</div></div>
<div class="a" style="left:811px;top:398px;width:170px;height:32px;background:#dedede;display:flex;align-items:center;justify-content:center;text-align:center;padding-top:2px;font-size:13px;line-height:14px;color:#000;"><div>验收情况记录</div></div>
<div class="a" style="left:981px;top:398px;width:102px;height:32px;background:#dedede;display:flex;align-items:center;justify-content:center;text-align:center;padding-top:2px;font-size:13px;line-height:14px;color:#000;"><div>备注</div></div>
<div class="a" style="left:512px;top:430px;width:149px;height:38px;background:#fff;display:flex;align-items:center;justify-content:center;text-align:center;padding-top:2px;font-size:11px;line-height:12px;color:#000;font-family:'Liberation Serif',serif;letter-spacing:1.6px;color:#222;letter-spacing:1px;"><div>排水坡度</div></div>
<div class="a" style="left:420px;top:430px;width:92px;height:38px;background:#fff;display:flex;align-items:center;justify-content:center;text-align:center;padding-top:2px;font-size:13px;line-height:14px;color:#000;letter-spacing:1.3px;"><div>4.2.6</div></div>
<div class="a" style="left:811px;top:430px;width:170px;height:38px;background:#fff;display:flex;align-items:center;justify-content:center;text-align:center;padding-top:2px;font-size:13px;line-height:14px;color:#000;"><div></div></div>
<div class="a" style="left:512px;top:468px;width:149px;height:38px;background:#fff;display:flex;align-items:center;justify-content:center;text-align:center;padding-top:2px;font-size:11px;line-height:12px;color:#000;font-family:'Liberation Serif',serif;letter-spacing:1.6px;color:#222;letter-spacing:3px;"><div>同上</div></div>
<div class="a" style="left:420px;top:468px;width:92px;height:38px;background:#fff;display:flex;align-items:center;justify-content:center;text-align:center;padding-top:2px;font-size:13px;line-height:14px;color:#000;letter-spacing:1.3px;"><div></div></div>
<div class="a" style="left:811px;top:468px;width:170px;height:38px;background:#fff;display:flex;align-items:center;justify-content:center;text-align:center;padding-top:2px;font-size:13px;line-height:14px;color:#000;"><div></div></div>
<div class="a" style="left:512px;top:506px;width:149px;height:38px;background:#fff;display:flex;align-items:center;justify-content:center;text-align:center;padding-top:2px;font-size:11px;line-height:12px;color:#000;font-family:'Liberation Serif',serif;letter-spacing:1.6px;color:#222;letter-spacing:3px;"><div>同上</div></div>
<div class="a" style="left:420px;top:506px;width:92px;height:38px;background:#fff;display:flex;align-items:center;justify-content:center;text-align:center;padding-top:2px;font-size:13px;line-height:14px;color:#000;letter-spacing:1.3px;"><div></div></div>
<div class="a" style="left:811px;top:506px;width:170px;height:38px;background:#fff;display:flex;align-items:center;justify-content:center;text-align:center;padding-top:2px;font-size:13px;line-height:14px;color:#000;"><div></div></div>
<div class="a" style="left:512px;top:544px;width:149px;height:38px;background:#fff;display:flex;align-items:center;justify-content:center;text-align:center;padding-top:2px;font-size:10px;line-height:11px;color:#000;font-family:'Liberation Serif',serif;letter-spacing:1.6px;color:#222;letter-spacing:1.6px;"><div>找坡层表面平整度<span style="letter-spacing:0;font-family:'Liberation Mono',monospace;font-size:10px">[7mm]</span></div></div>
<div class="a" style="left:420px;top:544px;width:92px;height:38px;background:#fff;display:flex;align-items:center;justify-content:center;text-align:center;padding-top:2px;font-size:13px;line-height:14px;color:#000;letter-spacing:1.3px;"><div>4.2.10</div></div>
<div class="a" style="left:811px;top:544px;width:170px;height:38px;background:#fff;display:flex;align-items:center;justify-content:center;text-align:center;padding-top:2px;font-size:13px;line-height:14px;color:#000;"><div>4</div></div>
<div class="a" style="left:512px;top:582px;width:149px;height:38px;background:#fff;display:flex;align-items:center;justify-content:center;text-align:center;padding-top:2px;font-size:11px;line-height:12px;color:#000;font-family:'Liberation Serif',serif;letter-spacing:1.6px;color:#222;letter-spacing:3px;"><div>同上</div></div>
<div class="a" style="left:420px;top:582px;width:92px;height:38px;background:#fff;display:flex;align-items:center;justify-content:center;text-align:center;padding-top:2px;font-size:13px;line-height:14px;color:#000;letter-spacing:1.3px;"><div></div></div>
<div class="a" style="left:811px;top:582px;width:170px;height:38px;background:#fff;display:flex;align-items:center;justify-content:center;text-align:center;padding-top:2px;font-size:13px;line-height:14px;color:#000;"><div>5</div></div>
<div class="a" style="left:512px;top:620px;width:149px;height:38px;background:#fff;display:flex;align-items:center;justify-content:center;text-align:center;padding-top:2px;font-size:11px;line-height:12px;color:#000;font-family:'Liberation Serif',serif;letter-spacing:1.6px;color:#222;letter-spacing:3px;"><div>同上</div></div>
<div class="a" style="left:420px;top:620px;width:92px;height:38px;background:#fff;display:flex;align-items:center;justify-content:center;text-align:center;padding-top:2px;font-size:13px;line-height:14px;color:#000;letter-spacing:1.3px;"><div></div></div>
<div class="a" style="left:811px;top:620px;width:170px;height:38px;background:#fff;display:flex;align-items:center;justify-content:center;text-align:center;padding-top:2px;font-size:13px;line-height:14px;color:#000;"><div>2</div></div>
<div class="a" style="left:512px;top:658px;width:149px;height:38px;background:#fff;display:flex;align-items:center;justify-content:center;text-align:center;padding-top:2px;font-size:10px;line-height:11px;color:#000;font-family:'Liberation Serif',serif;letter-spacing:1.6px;color:#222;letter-spacing:1.6px;"><div></div></div>
<div class="a" style="left:420px;top:658px;width:92px;height:38px;background:#fff;display:flex;align-items:center;justify-content:center;text-align:center;padding-top:2px;font-size:13px;line-height:14px;color:#000;letter-spacing:1.3px;"><div></div></div>
<div class="a" style="left:811px;top:658px;width:170px;height:38px;background:#fff;display:flex;align-items:center;justify-content:center;text-align:center;padding-top:2px;font-size:13px;line-height:14px;color:#000;"><div></div></div>
<div class="a" style="left:512px;top:696px;width:149px;height:38px;background:#fff;display:flex;align-items:center;justify-content:center;text-align:center;padding-top:2px;font-size:10px;line-height:11px;color:#000;font-family:'Liberation Serif',serif;letter-spacing:1.6px;color:#222;letter-spacing:1.6px;"><div></div></div>
<div class="a" style="left:420px;top:696px;width:92px;height:38px;background:#fff;display:flex;align-items:center;justify-content:center;text-align:center;padding-top:2px;font-size:13px;line-height:14px;color:#000;letter-spacing:1.3px;"><div></div></div>
<div class="a" style="left:811px;top:696px;width:170px;height:38px;background:#fff;display:flex;align-items:center;justify-content:center;text-align:center;padding-top:2px;font-size:13px;line-height:14px;color:#000;"><div></div></div>
<div class="a" style="left:419px;top:265px;width:665px;height:2px;background:#000"></div>
<div class="a" style="left:419px;top:298px;width:665px;height:1px;background:#000"></div>
<div class="a" style="left:419px;top:331px;width:665px;height:1px;background:#000"></div>
<div class="a" style="left:419px;top:364px;width:665px;height:1px;background:#000"></div>
<div class="a" style="left:419px;top:398px;width:665px;height:1px;background:#000"></div>
<div class="a" style="left:419px;top:430px;width:665px;height:1px;background:#000"></div>
<div class="a" style="left:419px;top:468px;width:665px;height:1px;background:#000"></div>
<div class="a" style="left:419px;top:506px;width:665px;height:1px;background:#000"></div>
<div class="a" style="left:419px;top:544px;width:665px;height:1px;background:#000"></div>
<div class="a" style="left:419px;top:582px;width:665px;height:1px;background:#000"></div>
<div class="a" style="left:419px;top:620px;width:665px;height:1px;background:#000"></div>
<div class="a" style="left:419px;top:658px;width:665px;height:1px;background:#000"></div>
<div class="a" style="left:419px;top:696px;width:665px;height:1px;background:#000"></div>
<div class="a" style="left:419px;top:265px;width:2px;height:438px;background:#000"></div>
<div class="a" style="left:1082px;top:265px;width:2px;height:438px;background:#000"></div>
<div class="a" style="left:512px;top:266px;width:1px;height:437px;background:#000"></div>
<div class="a" style="left:731px;top:266px;width:1px;height:132px;background:#000"></div>
<div class="a" style="left:828px;top:266px;width:1px;height:132px;background:#000"></div>
<div class="a" style="left:625px;top:298px;width:1px;height:33px;background:#000"></div>
<div class="a" style="left:965px;top:298px;width:1px;height:33px;background:#000"></div>
<div class="a" style="left:661px;top:398px;width:1px;height:305px;background:#000"></div>
<div class="a" style="left:811px;top:398px;width:1px;height:305px;background:#000"></div>
<div class="a" style="left:981px;top:398px;width:1px;height:305px;background:#000"></div>
<div class="a" style="left:660px;top:543px;width:153px;height:41px;border:1px solid #000;box-shadow:inset 0 0 0 1px #fff,inset 0 0 0 2px #000"></div>
<svg class="a" style="left:808px;top:579px" width="7" height="7" viewBox="0 0 7 7"><rect x="0" y="0" width="7" height="7" fill="#000"/><path d="M3.5 0 V7 M0 3.5 H7" stroke="#fff" stroke-width="1"/></svg>
</body></html>
